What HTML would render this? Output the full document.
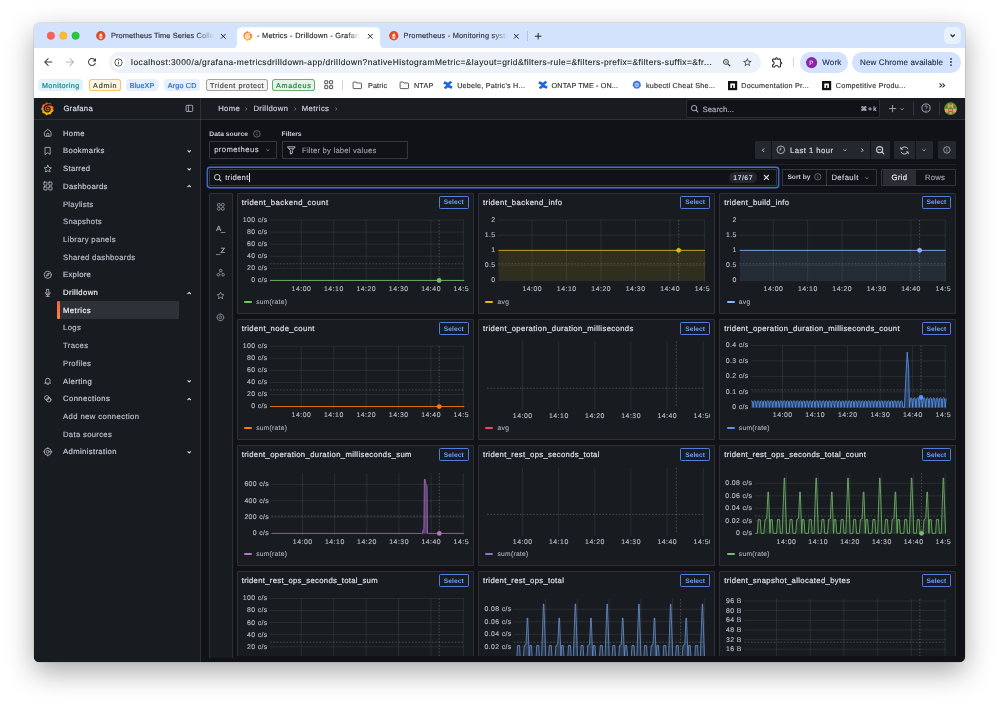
<!DOCTYPE html>
<html lang="en"><head><meta charset="utf-8"><title>- Metrics - Drilldown - Grafana</title>
<style>
html,body{margin:0;padding:0;background:#fff;}
body{width:999px;height:708px;overflow:hidden;position:relative;font-family:"Liberation Sans",sans-serif;}
#win{will-change:transform;position:absolute;left:34px;top:23px;width:931px;height:639px;border-radius:5.5px;overflow:hidden;background:linear-gradient(#d3e3fd 0,#d3e3fd 30px,#fff 30px,#fff 80px,#111217 80px);}
#shadow{position:absolute;left:34px;top:23px;width:931px;height:639px;border-radius:5.5px;
 box-shadow:0 0 0 0.5px rgba(0,0,0,.16),0 10px 28px rgba(0,0,0,.34);}
#win div,#win svg{position:absolute;box-sizing:border-box;}
#win svg{overflow:visible;}
.t{white-space:nowrap;line-height:12px;}
body{text-rendering:geometricPrecision;}
</style></head>
<body>
<div id="shadow"></div>
<div id="win">
<div style="left:0px;top:0px;width:931px;height:25px;background:#d3e3fd;"></div>
<div style="left:0px;top:25px;width:931px;height:49.7px;background:#fff;"></div>
<svg style="left:0px;top:0px;" width="60" height="25" viewBox="34 23 60 25"><circle cx="50.9" cy="35.700" r="3.750" fill="#fe5f57" stroke="#e2463f" stroke-width=".4"/><circle cx="63.3" cy="35.700" r="3.750" fill="#febc2e" stroke="#e0a028" stroke-width=".4"/><circle cx="75.6" cy="35.700" r="3.750" fill="#28c840" stroke="#1fa62f" stroke-width=".4"/></svg>
<svg style="left:0px;top:0px;" width="931" height="30" viewBox="34 23 931 30"><path d="M232 48.2 Q237 48.2 237 43.2 L237 32.2 Q237 27.2 242 27.2 L375 27.2 Q380 27.2 380 32.2 L380 43.2 Q380 48.2 385 48.2 Z" fill="#fff"/></svg>
<svg style="left:61.7px;top:7.9px;" width="9.6" height="9.6" viewBox="0 0 24 24"><circle cx="12" cy="12" r="11.700" fill="#e6481f"/><path d="M12.300 3.600C13 6.200 15.600 7.800 15.600 11V13.400H8.400V11C8.400 9 9.700 8.200 10 6.600C10.800 7.300 11.100 8.100 11.100 9C11.900 7.500 12.500 5.600 12.300 3.600Z" fill="#fff"/><rect x="6.900" y="14.300" width="10.200" height="1.800" fill="#fff"/><path d="M8.600 17H15.400C15.400 19 13.900 20.100 12 20.100C10.100 20.100 8.600 19 8.600 17Z" fill="#fff"/></svg>
<svg style="left:354.8px;top:7.9px;" width="9.6" height="9.6" viewBox="0 0 24 24"><circle cx="12" cy="12" r="11.700" fill="#e6481f"/><path d="M12.300 3.600C13 6.200 15.600 7.800 15.600 11V13.400H8.400V11C8.400 9 9.700 8.200 10 6.600C10.800 7.300 11.100 8.100 11.100 9C11.900 7.500 12.500 5.600 12.300 3.600Z" fill="#fff"/><rect x="6.900" y="14.300" width="10.200" height="1.800" fill="#fff"/><path d="M8.600 17H15.400C15.400 19 13.900 20.100 12 20.100C10.100 20.100 8.600 19 8.600 17Z" fill="#fff"/></svg>
<svg style="left:208.65px;top:7.75px;" width="9.7" height="9.7" viewBox="0 0 24 24"><defs><linearGradient id="gg1" x1="0" y1="0" x2="0" y2="1"><stop offset="0" stop-color="#f04e1c"/><stop offset=".5" stop-color="#f78b1f"/><stop offset="1" stop-color="#fbca0a"/></linearGradient></defs><path fill="url(#gg1)" stroke="url(#gg1)" stroke-width="1.2" stroke-linejoin="round" d="M7.66 4.04 L9.85 1.41 L14.18 3.25 L17.55 2.64 L19.68 6.84 L22.65 8.54 L21.59 13.12 L22.77 16.33 L19.01 19.16 L17.85 22.38 L13.15 22.13 L10.19 23.86 L6.75 20.64 L3.38 20.06 L2.81 15.39 L0.60 12.78 L3.17 8.83 L3.15 5.41Z"/><path d="M24.05 7.73 Q18.17 5.25 15.09 5.12 Q12.00 5.00 9.56 6.36 Q7.12 7.72 6.26 10.16 Q5.40 12.60 6.44 14.86 Q7.47 17.13 9.74 17.96 Q12.00 18.80 14.05 17.75 Q16.10 16.70 16.65 14.65 Q17.20 12.60 16.12 11.08 Q15.04 9.56 13.52 9.33 Q12.00 9.10 10.97 9.82 Q9.95 10.55 9.72 11.57 Q9.50 12.60 9.97 13.38 Q10.44 14.16 11.22 14.33 Q12.00 14.50 12.57 14.12 L13.13 13.73" fill="none" stroke="#fff" stroke-width="2.5" stroke-linecap="round"/></svg>
<div class="t" style="left:77px;top:7px;font-size:7.4px;color:#2f3134;-webkit-text-stroke:0.15px #2f3134;letter-spacing:0.11px;-webkit-mask-image:linear-gradient(90deg,#000 82%,transparent 100%);mask-image:linear-gradient(90deg,#000 82%,transparent 100%);">Prometheus Time Series Colle</div>
<div class="t" style="left:223px;top:7px;font-size:7.4px;color:#1f1f1f;-webkit-text-stroke:0.15px #1f1f1f;letter-spacing:0.27px;-webkit-mask-image:linear-gradient(90deg,#000 84%,transparent 96%);mask-image:linear-gradient(90deg,#000 84%,transparent 96%);">- Metrics - Drilldown - Grafana</div>
<div class="t" style="left:369.5px;top:7px;font-size:7.4px;color:#2f3134;-webkit-text-stroke:0.15px #2f3134;letter-spacing:0.21px;-webkit-mask-image:linear-gradient(90deg,#000 84%,transparent 97%);mask-image:linear-gradient(90deg,#000 84%,transparent 97%);">Prometheus - Monitoring syste</div>
<svg style="left:187.4px;top:10.5px;" width="4.6" height="4.6" viewBox="0 0 10 10"><path d="M0 0L10 10M10 0L0 10" stroke="#1f1f1f" stroke-width="2.07" fill="none"/></svg>
<svg style="left:333.7px;top:10.5px;" width="4.6" height="4.6" viewBox="0 0 10 10"><path d="M0 0L10 10M10 0L0 10" stroke="#1f1f1f" stroke-width="2.07" fill="none"/></svg>
<svg style="left:480.1px;top:10.5px;" width="4.6" height="4.6" viewBox="0 0 10 10"><path d="M0 0L10 10M10 0L0 10" stroke="#1f1f1f" stroke-width="2.07" fill="none"/></svg>
<div style="left:493.4px;top:8px;width:0.9px;height:9.6px;background:#a8c7fa;"></div>
<svg style="left:501.2px;top:9.6px;" width="6.4" height="6.4" viewBox="0 0 10 10"><path d="M5 0V10M0 5H10" stroke="#1f1f1f" stroke-width="1.500" fill="none"/></svg>
<div style="left:909.6px;top:4px;width:17.4px;height:17.4px;background:#e9f0fe;border-radius:5px;"></div>
<svg style="left:915.6px;top:11.4px;" width="5.4" height="3.2" viewBox="0 0 10 6"><path d="M1 1L5 5L9 1" stroke="#1f1f1f" stroke-width="2.200" fill="none"/></svg>
<svg style="left:7.9px;top:33.3px;" width="12.2" height="12.2" viewBox="0 0 24 24"><path fill="#3c4043" d="M20 11H7.830l5.590-5.590L12 4l-8 8 8 8 1.410-1.410L7.830 13H20v-2z"/></svg>
<svg style="left:29.8px;top:33.3px;" width="12.2" height="12.2" viewBox="0 0 24 24"><path fill="#b4b7bb" d="M4 11h12.170l-5.590-5.590L12 4l8 8-8 8-1.410-1.410L16.170 13H4v-2z"/></svg>
<svg style="left:52.2px;top:33.4px;" width="12" height="12" viewBox="0 0 24 24"><path fill="#3c4043" d="M17.650 6.350C16.200 4.900 14.210 4 12 4c-4.420 0-7.990 3.580-7.990 8s3.570 8 7.990 8c3.730 0 6.840-2.550 7.730-6h-2.080c-.82 2.330-3.040 4-5.650 4-3.310 0-6-2.690-6-6s2.690-6 6-6c1.660 0 3.140.69 4.220 1.780L13 11h7V4l-2.350 2.350z"/></svg>
<div style="left:74.6px;top:29px;width:652px;height:20.6px;background:#edf2fa;border-radius:10.3px;"></div>
<svg style="left:78px;top:32.8px;" width="13.2" height="13.2" viewBox="0 0 10 10"><circle cx="5" cy="5" r="5" fill="#fff"/></svg>
<svg style="left:80.1px;top:34.9px;" width="9" height="9" viewBox="0 0 24 24"><circle cx="12" cy="12" r="9.800" fill="none" stroke="#2b2d30" stroke-width="2.100"/><path d="M12 10.800v6.200" stroke="#2b2d30" stroke-width="2.300"/><circle cx="12" cy="7.400" r="1.400" fill="#2b2d30"/></svg>
<div class="t" style="left:97.1px;top:33px;font-size:8.4px;color:#1f1f1f;-webkit-text-stroke:0.12px #1f1f1f;letter-spacing:0.45px;">localhost:3000/a/grafana-metricsdrilldown-app/drilldown?nativeHistogramMetric=&amp;layout=grid&amp;filters-rule=&amp;filters-prefix=&amp;filters-suffix=&amp;fr...</div>
<svg style="left:687.7px;top:34.7px;" width="9.4" height="9.4" viewBox="0 0 24 24"><circle cx="10" cy="10" r="6.300" fill="none" stroke="#2a2c2f" stroke-width="2.300"/><path d="M14.800 14.800L21 21" stroke="#2a2c2f" stroke-width="2.800"/><path d="M7 10h6" stroke="#2a2c2f" stroke-width="1.900"/></svg>
<svg style="left:707.6px;top:33.9px;" width="10.6" height="10.6" viewBox="0 0 24 24"><path fill="#3c4043" d="M22 9.240l-7.190-.62L12 2 9.190 8.630 2 9.240l5.460 4.730L5.820 21 12 16.770 18.180 21l-1.630-7.030L22 9.240zM12 15.400l-3.760 2.270 1-4.280-3.320-2.880 4.380-.38L12 6.100l1.710 4.040 4.380.38-3.320 2.880 1 4.280L12 15.400z"/></svg>
<svg style="left:737.3px;top:33px;" width="12.6" height="12.6" viewBox="0 0 24 24"><path fill="#2f3134" d="M10.5 4.5c.28 0 .5.22.5.5v2h6v6h2c.28 0 .5.22.5.5s-.22.5-.5.5h-2v6h-2.120c-.68-1.750-2.390-3-4.380-3s-3.700 1.250-4.380 3H4v-2.120c1.750-.68 3-2.390 3-4.380 0-1.990-1.240-3.700-2.990-4.380L4 7h6V5c0-.28.22-.5.5-.5m0-2C9.120 2.5 8 3.620 8 5H4c-1.100 0-1.990.9-1.990 2v3.800h.29c1.490 0 2.700 1.210 2.700 2.700s-1.210 2.700-2.700 2.700H2V20c0 1.100.9 2 2 2h3.800v-.3c0-1.490 1.210-2.700 2.700-2.700s2.700 1.210 2.700 2.700v.3H17c1.100 0 2-.9 2-2v-4c1.380 0 2.500-1.120 2.500-2.500S20.380 11 19 11V7c0-1.100-.9-2-2-2h-4c0-1.380-1.120-2.500-2.500-2.500z"/></svg>
<div style="left:759.3px;top:34.4px;width:0.8px;height:10px;background:#c7d7f3;"></div>
<div style="left:766.1px;top:29px;width:48.3px;height:20.6px;background:#d3e3fd;border-radius:10.3px;"></div>
<svg style="left:771.8px;top:33.8px;" width="11.2" height="11.2" viewBox="0 0 10 10"><circle cx="5" cy="5" r="5" fill="#8e24aa"/></svg>
<div class="t" style="left:775.33px;top:35px;font-size:6.2px;color:#fff;">P</div>
<div class="t" style="left:788.3px;top:34px;font-size:8px;color:#1f2d4d;-webkit-text-stroke:0.15px #1f2d4d;letter-spacing:0.17px;">Work</div>
<div style="left:818px;top:29px;width:109px;height:20.6px;background:#d3e3fd;border-radius:10.3px;"></div>
<div class="t" style="left:826.1px;top:34px;font-size:8px;color:#1f2d4d;-webkit-text-stroke:0.15px #1f2d4d;letter-spacing:0.13px;">New Chrome available</div>
<svg style="left:915.2px;top:34.4px;" width="4" height="10" viewBox="0 0 4 10"><circle cx="2" cy="1.9" r=".9" fill="#1f2d4d"/><circle cx="2" cy="5" r=".9" fill="#1f2d4d"/><circle cx="2" cy="8.1" r=".9" fill="#1f2d4d"/></svg>
<div style="left:4px;top:55.7px;width:45.2px;height:12.8px;background:#dff3f8;border-radius:3.6px;"></div>
<div class="t" style="left:7.91px;top:57px;font-size:7.2px;color:#16808d;-webkit-text-stroke:0.17px #16808d;letter-spacing:0.42px;">Monitoring</div>
<div style="left:55px;top:55.7px;width:31.6px;height:12.8px;background:#fef6e0;border-radius:3.6px;box-shadow:inset 0 0 0 .8px #f6b73c;"></div>
<div class="t" style="left:59.08px;top:57px;font-size:7.2px;color:#3a3a3a;-webkit-text-stroke:0.17px #3a3a3a;letter-spacing:0.76px;">Admin</div>
<div style="left:92px;top:55.7px;width:32px;height:12.8px;background:#e6effd;border-radius:3.6px;"></div>
<div class="t" style="left:95.75px;top:57px;font-size:7.2px;color:#1a62d6;-webkit-text-stroke:0.17px #1a62d6;letter-spacing:0.1px;">BlueXP</div>
<div style="left:130px;top:55.7px;width:36.2px;height:12.8px;background:#e6effd;border-radius:3.6px;"></div>
<div class="t" style="left:133.79px;top:57px;font-size:7.2px;color:#1a62d6;-webkit-text-stroke:0.17px #1a62d6;letter-spacing:0.17px;">Argo CD</div>
<div style="left:172px;top:55.7px;width:61.7px;height:12.8px;background:#f3f3f3;border-radius:3.6px;box-shadow:inset 0 0 0 .8px #8c8c8c;"></div>
<div class="t" style="left:175.97px;top:57px;font-size:7.2px;color:#444;-webkit-text-stroke:0.17px #444;letter-spacing:0.54px;">Trident protect</div>
<div style="left:238px;top:55.7px;width:43px;height:12.8px;background:#e4f4e8;border-radius:3.6px;box-shadow:inset 0 0 0 .8px #3e9b4f;"></div>
<div class="t" style="left:242.07px;top:57px;font-size:7.2px;color:#1f7d36;-webkit-text-stroke:0.17px #1f7d36;letter-spacing:0.74px;">Amadeus</div>
<svg style="left:289.5px;top:57.4px;" width="9.4" height="9.4" viewBox="0 0 20 20"><rect x="1.6" y="1.6" width="6.400" height="6.400" rx=".5" fill="none" stroke="#2f3134" stroke-width="1.800"/><rect x="1.6" y="12" width="6.400" height="6.400" rx=".5" fill="none" stroke="#2f3134" stroke-width="1.800"/><rect x="12" y="1.6" width="6.400" height="6.400" rx=".5" fill="none" stroke="#2f3134" stroke-width="1.800"/><rect x="12" y="12" width="6.400" height="6.400" rx=".5" fill="none" stroke="#2f3134" stroke-width="1.800"/></svg>
<div style="left:308.1px;top:57.2px;width:0.8px;height:9.8px;background:#c7d7f3;"></div>
<svg style="left:318.2px;top:56.8px;" width="10.6" height="10.6" viewBox="0 0 24 24"><path d="M2.500 6a1.500 1.500 0 0 1 1.500-1.500h5l2 2.300h9a1.500 1.500 0 0 1 1.500 1.500V18a1.500 1.500 0 0 1-1.500 1.500H4A1.500 1.500 0 0 1 2.500 18z" fill="none" stroke="#3c4043" stroke-width="1.900"/></svg>
<div class="t" style="left:334px;top:57px;font-size:7.2px;color:#2c2e31;-webkit-text-stroke:0.14px #2c2e31;letter-spacing:0.13px;">Patric</div>
<svg style="left:364.7px;top:56.8px;" width="10.6" height="10.6" viewBox="0 0 24 24"><path d="M2.500 6a1.500 1.500 0 0 1 1.500-1.500h5l2 2.300h9a1.500 1.500 0 0 1 1.500 1.500V18a1.500 1.500 0 0 1-1.500 1.500H4A1.500 1.500 0 0 1 2.500 18z" fill="none" stroke="#3c4043" stroke-width="1.900"/></svg>
<div class="t" style="left:380px;top:57px;font-size:7.2px;color:#2c2e31;-webkit-text-stroke:0.14px #2c2e31;letter-spacing:0.18px;">NTAP</div>
<svg style="left:409px;top:57.1px;" width="10" height="10" viewBox="0 0 24 24"><path fill="#1868db" d="M2.200 17.300c-.3.500-.6 1-.8 1.400-.2.400-.1.900.3 1.100l4.500 2.800c.4.200.9.100 1.100-.3.200-.4.500-.900.800-1.400 2.100-3.400 4.200-3 8-1.200l4.500 2.100c.4.200.9 0 1.100-.400l2.100-4.800c.200-.4 0-.9-.400-1.100-1-.5-2.900-1.400-4.500-2.200-6.100-2.900-11.300-2.700-15.100 3.500z" transform="scale(.92) translate(1,1)"/><path fill="#1868db" d="M21.800 6.700c.3-.5.600-1 .8-1.400.2-.4.100-.9-.3-1.100l-4.500-2.800c-.4-.2-.9-.1-1.100.3-.2.400-.5.900-.8 1.400-2.100 3.400-4.200 3-8 1.200L3.400 2.200c-.4-.2-.9 0-1.100.400L.200 7.400c-.2.400 0 .9.400 1.100 1 .5 2.900 1.400 4.500 2.200 6.100 2.900 11.300 2.700 15.100-3.500z" transform="scale(.92) translate(1,1)"/></svg>
<div class="t" style="left:423.2px;top:57px;font-size:7.2px;color:#2c2e31;-webkit-text-stroke:0.14px #2c2e31;letter-spacing:0.22px;">Uebele, Patric&#x27;s H...</div>
<svg style="left:503.8px;top:57.1px;" width="10" height="10" viewBox="0 0 24 24"><path fill="#1868db" d="M2.200 17.300c-.3.500-.6 1-.8 1.400-.2.400-.1.900.3 1.100l4.500 2.800c.4.200.9.100 1.100-.3.200-.4.500-.900.800-1.400 2.100-3.400 4.200-3 8-1.200l4.500 2.100c.4.200.9 0 1.100-.400l2.100-4.800c.200-.4 0-.9-.400-1.100-1-.5-2.900-1.400-4.500-2.200-6.100-2.900-11.300-2.700-15.100 3.500z" transform="scale(.92) translate(1,1)"/><path fill="#1868db" d="M21.800 6.700c.3-.5.600-1 .8-1.400.2-.4.100-.9-.3-1.100l-4.500-2.800c-.4-.2-.9-.1-1.100.3-.2.400-.5.900-.8 1.400-2.100 3.400-4.200 3-8 1.200L3.400 2.200c-.4-.2-.9 0-1.100.400L.200 7.400c-.2.400 0 .9.400 1.100 1 .5 2.900 1.400 4.500 2.200 6.100 2.900 11.300 2.700 15.100-3.500z" transform="scale(.92) translate(1,1)"/></svg>
<div class="t" style="left:517.6px;top:57px;font-size:7.2px;color:#2c2e31;-webkit-text-stroke:0.14px #2c2e31;letter-spacing:0.13px;">ONTAP TME - ON...</div>
<svg style="left:598.3px;top:57.3px;" width="9.6" height="9.6" viewBox="0 0 24 24"><path fill="#326ce5" d="M12 1.300l8.300 4 2.100 9-5.800 7.200H7.400l-5.800-7.200 2.100-9z"/><circle cx="12" cy="12.300" r="4.600" fill="none" stroke="#fff" stroke-width="1.300"/><path d="M12 5.500v13.600M6.100 8.900l11.800 6.800M17.900 8.900L6.100 15.700" stroke="#fff" stroke-width="1.100"/><circle cx="12" cy="12.300" r="1.500" fill="#326ce5"/></svg>
<div class="t" style="left:612px;top:57px;font-size:7.2px;color:#2c2e31;-webkit-text-stroke:0.14px #2c2e31;letter-spacing:0.23px;">kubectl Cheat She...</div>
<svg style="left:693.6px;top:57.5px;" width="9.2" height="9.2" viewBox="0 0 24 24"><rect x="0" y="0" width="24" height="24" fill="#111"/><path fill="#fff" d="M6 6.500h12V18h-4.300v-7.200h-3.400V18H6z"/></svg>
<div class="t" style="left:707.2px;top:57px;font-size:7.2px;color:#2c2e31;-webkit-text-stroke:0.14px #2c2e31;letter-spacing:0.25px;">Documentation Pr...</div>
<svg style="left:788.2px;top:57.5px;" width="9.2" height="9.2" viewBox="0 0 24 24"><rect x="0" y="0" width="24" height="24" fill="#111"/><path fill="#fff" d="M6 6.500h12V18h-4.300v-7.200h-3.400V18H6z"/></svg>
<div class="t" style="left:801.7px;top:57px;font-size:7.2px;color:#2c2e31;-webkit-text-stroke:0.14px #2c2e31;letter-spacing:0.25px;">Competitive Produ...</div>
<svg style="left:905px;top:59.7px;" width="6.4" height="4.8" viewBox="0 0 12 9"><path d="M1 .8L5 4.500L1 8.200M6.500 .8L10.500 4.500L6.500 8.200" fill="none" stroke="#2f3134" stroke-width="2"/></svg>
<div style="left:0px;top:74.7px;width:931px;height:564.3px;background:#111217;"></div>
<div style="left:0px;top:74.7px;width:931px;height:22.3px;background:#181b1f;border-bottom:.6px solid rgba(204,204,220,0.12);"></div>
<div style="left:0px;top:74.7px;width:166.6px;height:564.3px;background:#181b1f;border-right:.6px solid rgba(204,204,220,0.12);"></div>
<div style="left:0px;top:96.4px;width:166.6px;height:0.6px;background:rgba(204,204,220,0.12);"></div>
<svg style="left:6.9px;top:79.2px;" width="13" height="13" viewBox="0 0 24 24"><defs><linearGradient id="gg2" x1="0" y1="0" x2="0" y2="1"><stop offset="0" stop-color="#f04e1c"/><stop offset=".5" stop-color="#f78b1f"/><stop offset="1" stop-color="#fbca0a"/></linearGradient></defs><path fill="url(#gg2)" stroke="url(#gg2)" stroke-width="1.2" stroke-linejoin="round" d="M7.66 4.04 L9.85 1.41 L14.18 3.25 L17.55 2.64 L19.68 6.84 L22.65 8.54 L21.59 13.12 L22.77 16.33 L19.01 19.16 L17.85 22.38 L13.15 22.13 L10.19 23.86 L6.75 20.64 L3.38 20.06 L2.81 15.39 L0.60 12.78 L3.17 8.83 L3.15 5.41Z"/><path d="M24.05 7.73 Q18.17 5.25 15.09 5.12 Q12.00 5.00 9.56 6.36 Q7.12 7.72 6.26 10.16 Q5.40 12.60 6.44 14.86 Q7.47 17.13 9.74 17.96 Q12.00 18.80 14.05 17.75 Q16.10 16.70 16.65 14.65 Q17.20 12.60 16.12 11.08 Q15.04 9.56 13.52 9.33 Q12.00 9.10 10.97 9.82 Q9.95 10.55 9.72 11.57 Q9.50 12.60 9.97 13.38 Q10.44 14.16 11.22 14.33 Q12.00 14.50 12.57 14.12 L13.13 13.73" fill="none" stroke="#181b1f" stroke-width="2.5" stroke-linecap="round"/></svg>
<div class="t" style="left:29.4px;top:80px;font-size:7.7px;color:#dadae6;-webkit-text-stroke:0.2px #dadae6;letter-spacing:0.25px;">Grafana</div>
<svg style="left:150.6px;top:81.2px;" width="8.8" height="8.8" viewBox="0 0 24 24"><rect x="3" y="3.500" width="18" height="17" rx="2.500" fill="none" stroke="#ccccdc" stroke-width="2"/><path d="M9.300 3.500v17" stroke="#ccccdc" stroke-width="2"/></svg>
<div class="t" style="left:184.2px;top:80px;font-size:7.7px;color:#ccccdc;-webkit-text-stroke:0.18px #ccccdc;letter-spacing:0.36px;">Home</div>
<svg style="left:211.26px;top:84px;" width="2.28" height="3.8" viewBox="0 0 6 10"><path d="M1 1L5 5L1 9" fill="none" stroke="#a0a1ae" stroke-width="1.700"/></svg>
<div class="t" style="left:219.4px;top:80px;font-size:7.7px;color:#ccccdc;-webkit-text-stroke:0.18px #ccccdc;letter-spacing:0.37px;">Drilldown</div>
<svg style="left:259.86px;top:84px;" width="2.28" height="3.8" viewBox="0 0 6 10"><path d="M1 1L5 5L1 9" fill="none" stroke="#a0a1ae" stroke-width="1.700"/></svg>
<div class="t" style="left:267.8px;top:80px;font-size:7.7px;color:#ccccdc;-webkit-text-stroke:0.18px #ccccdc;letter-spacing:0.4px;">Metrics</div>
<svg style="left:301.06px;top:84px;" width="2.28" height="3.8" viewBox="0 0 6 10"><path d="M1 1L5 5L1 9" fill="none" stroke="#a0a1ae" stroke-width="1.700"/></svg>
<div style="left:652.4px;top:76.4px;width:193.9px;height:18.5px;background:#111217;border:.6px solid rgba(204,204,220,0.15);border-radius:2px;"></div>
<svg style="left:656.3px;top:81.1px;" width="9.4" height="9.4" viewBox="0 0 24 24"><circle cx="10.500" cy="10.500" r="6.900" fill="none" stroke="#a9aab8" stroke-width="2.500"/><path d="M15.600 15.600L20 20" stroke="#a9aab8" stroke-width="2.700" stroke-linecap="round"/></svg>
<div class="t" style="left:668.6px;top:81px;font-size:7.7px;color:#a9aab8;-webkit-text-stroke:0.2px #a9aab8;letter-spacing:0.06px;">Search...</div>
<div class="t" style="left:826.8px;top:81px;font-size:6.3px;color:#c4c5d2;-webkit-text-stroke:0.2px #c4c5d2;letter-spacing:1.28px;">⌘+k</div>
<svg style="left:855px;top:82px;" width="7.2" height="7.2" viewBox="0 0 10 10"><path d="M5 0V10M0 5H10" stroke="#a6a7b4" stroke-width="1.300" fill="none"/></svg>
<svg style="left:865.9px;top:84.75px;" width="4.2" height="2.31" viewBox="0 0 10 6"><path d="M1 1L5 5L9 1" fill="none" stroke="#b4b5c3" stroke-width="2.2"/></svg>
<div style="left:879.3px;top:79.4px;width:1.1px;height:12.4px;background:#34363d;"></div>
<svg style="left:887.4px;top:80.4px;" width="10" height="10" viewBox="0 0 24 24"><circle cx="12" cy="12" r="9.800" fill="none" stroke="#a9aab8" stroke-width="2.300"/><path d="M9.300 9.400a2.800 2.800 0 1 1 4 2.600c-.9.500-1.300 1-1.300 2" fill="none" stroke="#a9aab8" stroke-width="2.200"/><circle cx="12" cy="17.200" r="1.300" fill="#a9aab8"/></svg>
<div style="left:904.5px;top:79.4px;width:1.1px;height:12.4px;background:#34363d;"></div>
<svg style="left:910px;top:78.8px;" width="13.2" height="13.2" viewBox="0 0 24 24"><clipPath id="avc"><circle cx="12" cy="12" r="12"/></clipPath><g clip-path="url(#avc)"><circle cx="12" cy="12" r="12" fill="#5a8f1e"/><path d="M7.300 3h2.700v3h4V3h2.700v8.500H14V8.200h-4v3.300H7.300z" fill="#ff8f82"/><path d="M1.500 12.500h6.300v6.800H1.500zM16.200 12.500h6.300v6.800h-6.300zM9.300 12.800h5.400v3.400H9.300zM9.800 18.200h4.400v3.200H9.800z" fill="#ff8f82"/><path d="M10.800 13.600h2.400v1.500h-2.400z" fill="#5a8f1e"/></g></svg>
<div class="t" style="left:29px;top:105px;font-size:7.7px;color:#c6c6d5;-webkit-text-stroke:0.18px #c6c6d5;letter-spacing:0.31px;">Home</div>
<svg style="left:9.1px;top:105.2px;" width="9.6" height="9.6" viewBox="0 0 24 24"><path fill="none" stroke="rgba(204,204,220,0.82)" stroke-width="2.200" stroke-linejoin="round" stroke-linecap="round" d="M3.800 10.200L12 3.200l8.200 7v8.800a1.800 1.800 0 0 1-1.800 1.800H5.600a1.800 1.800 0 0 1-1.800-1.800z"/><path fill="none" stroke="rgba(204,204,220,0.82)" stroke-width="2.200" stroke-linejoin="round" stroke-linecap="round" d="M9.200 20.500v-4.700a2.800 2.800 0 0 1 5.600 0v4.700"/></svg>
<div class="t" style="left:29px;top:122px;font-size:7.7px;color:#c6c6d5;-webkit-text-stroke:0.18px #c6c6d5;letter-spacing:0.37px;">Bookmarks</div>
<svg style="left:9.1px;top:122.9px;" width="9.6" height="9.6" viewBox="0 0 24 24"><path fill="none" stroke="rgba(204,204,220,0.82)" stroke-width="2.200" stroke-linejoin="round" stroke-linecap="round" d="M6 3.500h12v17.500l-6-4-6 4z"/></svg>
<svg style="left:153px;top:126.99px;" width="4.4" height="2.42" viewBox="0 0 10 6"><path d="M1 1L5 5L9 1" fill="none" stroke="#d6d6e3" stroke-width="2.7"/></svg>
<div class="t" style="left:29px;top:140px;font-size:7.7px;color:#c6c6d5;-webkit-text-stroke:0.18px #c6c6d5;letter-spacing:0.31px;">Starred</div>
<svg style="left:9.1px;top:140.6px;" width="9.6" height="9.6" viewBox="0 0 24 24"><path fill="none" stroke="rgba(204,204,220,0.82)" stroke-width="2.200" stroke-linejoin="round" stroke-linecap="round" d="M12 3l2.700 5.700 6.300.8-4.600 4.300 1.200 6.200-5.600-3.100L6.400 20l1.200-6.200L3 9.500l6.300-.8z"/></svg>
<svg style="left:153px;top:144.69px;" width="4.4" height="2.42" viewBox="0 0 10 6"><path d="M1 1L5 5L9 1" fill="none" stroke="#d6d6e3" stroke-width="2.7"/></svg>
<div class="t" style="left:29px;top:158px;font-size:7.7px;color:#c6c6d5;-webkit-text-stroke:0.18px #c6c6d5;letter-spacing:0.33px;">Dashboards</div>
<svg style="left:8.95px;top:158.15px;" width="9.9" height="9.9" viewBox="0 0 24 24"><rect fill="none" stroke="rgba(204,204,220,0.82)" stroke-width="2.200" stroke-linejoin="round" stroke-linecap="round" x="2.2" y="2.6" width="7.600" height="7.600" rx=".8"/><rect fill="none" stroke="rgba(204,204,220,0.82)" stroke-width="2.200" stroke-linejoin="round" stroke-linecap="round" x="2.2" y="14.2" width="7.600" height="7.600" rx=".8"/><rect fill="none" stroke="rgba(204,204,220,0.82)" stroke-width="2.200" stroke-linejoin="round" stroke-linecap="round" x="14.2" y="2.6" width="7.600" height="7.600" rx=".8"/><rect fill="none" stroke="rgba(204,204,220,0.82)" stroke-width="2.200" stroke-linejoin="round" stroke-linecap="round" x="14.2" y="14.2" width="7.600" height="7.600" rx=".8"/></svg>
<svg style="left:153px;top:162.49px;" width="4.4" height="2.42" viewBox="0 0 10 6"><path d="M1 5L5 1L9 5" fill="none" stroke="#d6d6e3" stroke-width="2.7"/></svg>
<div class="t" style="left:29px;top:176px;font-size:7.7px;color:#bcbccb;-webkit-text-stroke:0.18px #bcbccb;letter-spacing:0.24px;">Playlists</div>
<div class="t" style="left:29px;top:193px;font-size:7.7px;color:#bcbccb;-webkit-text-stroke:0.18px #bcbccb;letter-spacing:0.29px;">Snapshots</div>
<div class="t" style="left:29px;top:211px;font-size:7.7px;color:#bcbccb;-webkit-text-stroke:0.18px #bcbccb;letter-spacing:0.33px;">Library panels</div>
<div class="t" style="left:29px;top:229px;font-size:7.7px;color:#bcbccb;-webkit-text-stroke:0.18px #bcbccb;letter-spacing:0.31px;">Shared dashboards</div>
<div class="t" style="left:29px;top:246px;font-size:7.7px;color:#c6c6d5;-webkit-text-stroke:0.18px #c6c6d5;letter-spacing:0.3px;">Explore</div>
<svg style="left:9.1px;top:246.8px;" width="9.6" height="9.6" viewBox="0 0 24 24"><circle fill="none" stroke="rgba(204,204,220,0.82)" stroke-width="2.200" stroke-linejoin="round" stroke-linecap="round" cx="12" cy="12" r="9"/><path fill="none" stroke="rgba(204,204,220,0.82)" stroke-width="2.200" stroke-linejoin="round" stroke-linecap="round" d="M15.500 8.500l-2 5-5 2 2-5z"/></svg>
<div class="t" style="left:29px;top:264px;font-size:7.7px;color:#ececf4;-webkit-text-stroke:0.18px #ececf4;letter-spacing:0.41px;">Drilldown</div>
<svg style="left:9.1px;top:264.5px;" width="9.6" height="9.6" viewBox="0 0 24 24"><path fill="none" stroke="rgba(204,204,220,0.82)" stroke-width="2.200" stroke-linejoin="round" stroke-linecap="round" d="M9.500 3.500h5v9a2.500 2.500 0 0 1-5 0z"/><path fill="none" stroke="rgba(204,204,220,0.82)" stroke-width="2.200" stroke-linejoin="round" stroke-linecap="round" d="M6 11.500a6 6 0 0 0 12 0M12 17.500v3M8 20.800h8"/></svg>
<svg style="left:153px;top:268.69px;" width="4.4" height="2.42" viewBox="0 0 10 6"><path d="M1 5L5 1L9 5" fill="none" stroke="#d6d6e3" stroke-width="2.7"/></svg>
<div style="left:23.5px;top:278.2px;width:121.2px;height:17.6px;background:rgba(204,204,220,0.13);border-radius:1.100px;"></div>
<div style="left:23.4px;top:278.2px;width:2.5px;height:17.6px;background:linear-gradient(#f55f3e,#ff8833);border-radius:1.100px;"></div>
<div class="t" style="left:29px;top:282px;font-size:7.7px;color:#f0f0f6;-webkit-text-stroke:0.18px #f0f0f6;letter-spacing:0.46px;">Metrics</div>
<div class="t" style="left:29px;top:299px;font-size:7.7px;color:#bcbccb;-webkit-text-stroke:0.18px #bcbccb;letter-spacing:0.38px;">Logs</div>
<div class="t" style="left:29px;top:317px;font-size:7.7px;color:#bcbccb;-webkit-text-stroke:0.18px #bcbccb;letter-spacing:0.36px;">Traces</div>
<div class="t" style="left:29px;top:335px;font-size:7.7px;color:#bcbccb;-webkit-text-stroke:0.18px #bcbccb;letter-spacing:0.32px;">Profiles</div>
<div class="t" style="left:29px;top:353px;font-size:7.7px;color:#c6c6d5;-webkit-text-stroke:0.18px #c6c6d5;letter-spacing:0.39px;">Alerting</div>
<svg style="left:9.1px;top:353px;" width="9.6" height="9.6" viewBox="0 0 24 24"><path fill="none" stroke="rgba(204,204,220,0.82)" stroke-width="2.200" stroke-linejoin="round" stroke-linecap="round" d="M6.500 16.500v-5.500a5.500 5.500 0 0 1 11 0v5.500l1.500 1.500h-14zM10 20.500h4"/></svg>
<svg style="left:153px;top:357.09px;" width="4.4" height="2.42" viewBox="0 0 10 6"><path d="M1 1L5 5L9 1" fill="none" stroke="#d6d6e3" stroke-width="2.7"/></svg>
<div class="t" style="left:29px;top:370px;font-size:7.7px;color:#c6c6d5;-webkit-text-stroke:0.18px #c6c6d5;letter-spacing:0.4px;">Connections</div>
<svg style="left:9.1px;top:370.7px;" width="9.6" height="9.6" viewBox="0 0 24 24"><circle fill="none" stroke="rgba(204,204,220,0.82)" stroke-width="2.200" stroke-linejoin="round" stroke-linecap="round" cx="9.500" cy="9.500" r="5.500"/><circle fill="none" stroke="rgba(204,204,220,0.82)" stroke-width="2.200" stroke-linejoin="round" stroke-linecap="round" cx="14.500" cy="14.500" r="5.500"/></svg>
<svg style="left:153px;top:374.89px;" width="4.4" height="2.42" viewBox="0 0 10 6"><path d="M1 5L5 1L9 5" fill="none" stroke="#d6d6e3" stroke-width="2.7"/></svg>
<div class="t" style="left:29px;top:388px;font-size:7.7px;color:#bcbccb;-webkit-text-stroke:0.18px #bcbccb;letter-spacing:0.4px;">Add new connection</div>
<div class="t" style="left:29px;top:406px;font-size:7.7px;color:#bcbccb;-webkit-text-stroke:0.18px #bcbccb;letter-spacing:0.32px;">Data sources</div>
<div class="t" style="left:29px;top:423px;font-size:7.7px;color:#c6c6d5;-webkit-text-stroke:0.18px #c6c6d5;letter-spacing:0.37px;">Administration</div>
<svg style="left:9.1px;top:423.8px;" width="9.6" height="9.6" viewBox="0 0 24 24"><circle fill="none" stroke="rgba(204,204,220,0.82)" stroke-width="2.200" stroke-linejoin="round" stroke-linecap="round" cx="12" cy="12" r="8.800"/><circle fill="none" stroke="rgba(204,204,220,0.82)" stroke-width="2.200" stroke-linejoin="round" stroke-linecap="round" cx="12" cy="12" r="3.600"/><path fill="none" stroke="rgba(204,204,220,0.82)" stroke-width="2.200" stroke-linejoin="round" stroke-linecap="round" d="M12 1.800v2.200M12 20v2.200M1.800 12H4M20 12h2.200"/></svg>
<svg style="left:153px;top:427.89px;" width="4.4" height="2.42" viewBox="0 0 10 6"><path d="M1 1L5 5L9 1" fill="none" stroke="#d6d6e3" stroke-width="2.7"/></svg>
<div class="t" style="left:175.3px;top:106px;font-size:6.7px;color:#d0d0de;font-weight:700;letter-spacing:0.04px;">Data source</div>
<svg style="left:219.4px;top:106.8px;" width="7.8" height="7.8" viewBox="0 0 24 24"><circle cx="12" cy="12" r="10" fill="none" stroke="rgba(204,204,220,0.65)" stroke-width="2"/><path d="M12 11v6" stroke="rgba(204,204,220,0.65)" stroke-width="2.200"/><circle cx="12" cy="7.500" r="1.300" fill="rgba(204,204,220,0.65)"/></svg>
<div class="t" style="left:247.6px;top:106px;font-size:6.7px;color:#d0d0de;font-weight:700;letter-spacing:-0.02px;">Filters</div>
<div style="left:175.3px;top:118px;width:67.8px;height:18px;background:#111217;border:.6px solid rgba(204,204,220,0.20);border-radius:1.100px;"></div>
<div class="t" style="left:180.2px;top:121px;font-size:7.7px;color:#d2d2df;-webkit-text-stroke:0.12px #d2d2df;letter-spacing:0.41px;">prometheus</div>
<svg style="left:231.5px;top:126.16px;" width="3.8" height="2.09" viewBox="0 0 10 6"><path d="M1 1L5 5L9 1" fill="none" stroke="#a9aab8" stroke-width="2"/></svg>
<div style="left:247.6px;top:118px;width:126px;height:18px;background:#111217;border:.6px solid rgba(204,204,220,0.20);border-radius:1.100px;"></div>
<svg style="left:252.3px;top:121.9px;" width="10.6" height="10.6" viewBox="0 0 24 24"><path d="M3.200 4.200h17.600l-6.600 8.200v6.400l-4.400 1.600v-8z" fill="none" stroke="#c2c3d0" stroke-width="2.100" stroke-linejoin="round"/><path d="M6.800 8.400h10.400" stroke="#c2c3d0" stroke-width="1.700"/></svg>
<div class="t" style="left:268px;top:122px;font-size:7.7px;color:#9fa0ae;-webkit-text-stroke:0.1px #9fa0ae;letter-spacing:0.2px;">Filter by label values</div>
<div style="left:720.8px;top:118.1px;width:16.2px;height:17.8px;background:#24272d;border-radius:1.100px 0 0 1.100px;"></div>
<div style="left:737.6px;top:118.1px;width:82.2px;height:17.8px;background:#24272d;border-radius:0;"></div>
<div style="left:820.4px;top:118.1px;width:16px;height:17.8px;background:#24272d;border-radius:0;"></div>
<div style="left:837px;top:118.1px;width:19.3px;height:17.8px;background:#24272d;border-radius:0 1.100px 1.100px 0;"></div>
<div style="left:860.3px;top:118.1px;width:20.6px;height:17.8px;background:#24272d;border-radius:1.100px 0 0 1.100px;"></div>
<div style="left:881.5px;top:118.1px;width:17.8px;height:17.8px;background:#24272d;border-radius:0 1.100px 1.100px 0;"></div>
<div style="left:904.3px;top:118.1px;width:17.7px;height:17.8px;background:#24272d;border-radius:1.100px;"></div>
<svg style="left:727.7px;top:124.8px;" width="2.6" height="4.4" viewBox="0 0 6 10"><path d="M5 1L1 5L5 9" fill="none" stroke="#d6d6e2" stroke-width="2.200"/></svg>
<svg style="left:741.8px;top:122.2px;" width="9.6" height="9.6" viewBox="0 0 24 24"><circle cx="12" cy="12" r="9.500" fill="none" stroke="#ccccdc" stroke-width="2"/><path d="M12 6.500v6h-4" fill="none" stroke="#ccccdc" stroke-width="2"/></svg>
<div class="t" style="left:756px;top:122px;font-size:7.7px;color:#d6d6e2;-webkit-text-stroke:0.2px #d6d6e2;letter-spacing:0.46px;">Last 1 hour</div>
<svg style="left:808.6px;top:126.2px;" width="4" height="2.2" viewBox="0 0 10 6"><path d="M1 1L5 5L9 1" fill="none" stroke="#d6d6e2" stroke-width="2.2"/></svg>
<svg style="left:827.1px;top:124.8px;" width="2.6" height="4.4" viewBox="0 0 6 10"><path d="M1 1L5 5L1 9" fill="none" stroke="#d6d6e2" stroke-width="2.200"/></svg>
<svg style="left:841.3px;top:121.9px;" width="10.6" height="10.6" viewBox="0 0 24 24"><circle cx="10.500" cy="10.500" r="6.900" fill="none" stroke="#ccccdc" stroke-width="2.500"/><path d="M15.600 15.600L20 20" stroke="#ccccdc" stroke-width="2.700" stroke-linecap="round"/><path d="M7.300 10.500h6.400" stroke="#ccccdc" stroke-width="1.900"/></svg>
<svg style="left:864.9px;top:121.5px;" width="11" height="11" viewBox="0 0 24 24"><path d="M19.500 9A8 8 0 0 0 5 8.500M4.500 15A8 8 0 0 0 19 15.500" fill="none" stroke="#ccccdc" stroke-width="2.100"/><path d="M4 4.500v4.500h4.500M20 19.500V15h-4.500" fill="none" stroke="#ccccdc" stroke-width="2.100"/></svg>
<svg style="left:888.4px;top:126.2px;" width="4" height="2.2" viewBox="0 0 10 6"><path d="M1 1L5 5L9 1" fill="none" stroke="#d6d6e2" stroke-width="2.2"/></svg>
<svg style="left:909.2px;top:123.1px;" width="7.8" height="7.8" viewBox="0 0 24 24"><circle cx="12" cy="12" r="10" fill="none" stroke="#ccccdc" stroke-width="2.100"/><path d="M12 11v6" stroke="#ccccdc" stroke-width="2.300"/><circle cx="12" cy="7.400" r="1.400" fill="#ccccdc"/></svg>
<div style="left:175.3px;top:140.6px;width:746.7px;height:0.6px;background:rgba(204,204,220,0.09);"></div>
<div style="left:174.9px;top:145.5px;width:568.2px;height:17.4px;background:#111217;border:.6px solid rgba(204,204,220,0.20);border-radius:1.300px;box-shadow:0 0 0 1.100px #111217,0 0 0 2.400px #3d71d9;"></div>
<svg style="left:178.8px;top:149.5px;" width="9.6" height="9.6" viewBox="0 0 24 24"><circle cx="10.500" cy="10.500" r="6.900" fill="none" stroke="#c8c9d6" stroke-width="2.500"/><path d="M15.600 15.600L20 20" stroke="#c8c9d6" stroke-width="2.700" stroke-linecap="round"/></svg>
<div class="t" style="left:191.2px;top:149px;font-size:7.7px;color:#d6d6e2;-webkit-text-stroke:0.12px #d6d6e2;letter-spacing:0.29px;">trident</div>
<div style="left:215px;top:149.8px;width:0.7px;height:8.8px;background:#e8e8f0;"></div>
<div style="left:694.5px;top:148.5px;width:28.7px;height:11.6px;background:#23262c;border-radius:5.800px;"></div>
<div class="t" style="left:699.36px;top:150px;font-size:6.8px;color:#d4d4e0;font-weight:700;letter-spacing:0.52px;">17/67</div>
<svg style="left:729.7px;top:152px;" width="4.8" height="4.8" viewBox="0 0 10 10"><path d="M0 0L10 10M10 0L0 10" stroke="#d6d6e2" stroke-width="2.4" fill="none"/></svg>
<div style="left:748.2px;top:145.5px;width:94.5px;height:17.4px;background:#111217;border:.6px solid rgba(204,204,220,0.20);border-radius:1.100px;"></div>
<div style="left:792.2px;top:145.5px;width:0.6px;height:17.4px;background:rgba(204,204,220,0.20);"></div>
<div class="t" style="left:753.4px;top:149px;font-size:6.6px;color:#ccccdc;font-weight:700;letter-spacing:0.07px;">Sort by</div>
<svg style="left:779.8px;top:150.4px;" width="7.6" height="7.6" viewBox="0 0 24 24"><circle cx="12" cy="12" r="10" fill="none" stroke="rgba(204,204,220,0.65)" stroke-width="2"/><path d="M12 11v6" stroke="rgba(204,204,220,0.65)" stroke-width="2.200"/><circle cx="12" cy="7.500" r="1.300" fill="rgba(204,204,220,0.65)"/></svg>
<div class="t" style="left:797.4px;top:149px;font-size:7.7px;color:#d2d2df;-webkit-text-stroke:0.12px #d2d2df;letter-spacing:0.43px;">Default</div>
<svg style="left:831.3px;top:153.56px;" width="3.8" height="2.09" viewBox="0 0 10 6"><path d="M1 1L5 5L9 1" fill="none" stroke="#a9aab8" stroke-width="2"/></svg>
<div style="left:847.3px;top:145.5px;width:74.7px;height:17.4px;background:#111217;border:.6px solid rgba(204,204,220,0.20);border-radius:1.100px;"></div>
<div style="left:848.8px;top:146.7px;width:32.8px;height:15px;background:#2a2d34;border-radius:1.100px;"></div>
<div class="t" style="left:857.46px;top:149px;font-size:7.7px;color:#e9e9f1;-webkit-text-stroke:0.2px #e9e9f1;letter-spacing:0.31px;">Grid</div>
<div class="t" style="left:891.09px;top:149px;font-size:7.7px;color:#a3a4b2;-webkit-text-stroke:0.15px #a3a4b2;letter-spacing:0.19px;">Rows</div>
<div style="left:174.6px;top:169.7px;width:24px;height:465.3px;background:#181b1f;border:.6px solid rgba(204,204,220,0.12);border-bottom:none;border-radius:1.100px 1.100px 0 0;"></div>
<svg style="left:181.9px;top:179.1px;" width="9.6" height="9.6" viewBox="0 0 24 24"><circle fill="none" stroke="#a9aab8" stroke-width="1.800" cx="7" cy="7" r="3.700"/><circle fill="none" stroke="#a9aab8" stroke-width="1.800" cx="7" cy="17" r="3.700"/><circle fill="none" stroke="#a9aab8" stroke-width="1.800" cx="17" cy="7" r="3.700"/><circle fill="none" stroke="#a9aab8" stroke-width="1.800" cx="17" cy="17" r="3.700"/></svg>
<div class="t" style="left:182.19px;top:200px;font-size:7.4px;color:#b4b5c3;-webkit-text-stroke:0.2px #b4b5c3;letter-spacing:-0.03px;">A_</div>
<div class="t" style="left:182.29px;top:222px;font-size:7.4px;color:#b4b5c3;-webkit-text-stroke:0.2px #b4b5c3;letter-spacing:0.18px;">_Z</div>
<svg style="left:182px;top:244.8px;" width="9.4" height="9.4" viewBox="0 0 24 24"><circle fill="none" stroke="#a9aab8" stroke-width="1.800" cx="12" cy="6.200" r="3.300"/><circle fill="none" stroke="#a9aab8" stroke-width="1.800" cx="5.800" cy="17.300" r="3.300"/><circle fill="none" stroke="#a9aab8" stroke-width="1.800" cx="18.200" cy="17.300" r="3.300"/><path fill="none" stroke="#a9aab8" stroke-width="1.800" stroke-opacity=".55" d="M10 9.200L7.600 14.200M14 9.200l2.400 5M9.500 17.300h5"/></svg>
<svg style="left:182.1px;top:267.6px;" width="9.2" height="9.2" viewBox="0 0 24 24"><path fill="none" stroke="#a9aab8" stroke-width="1.800" stroke-linejoin="round" d="M12 3l2.700 5.700 6.300.8-4.600 4.300 1.200 6.200-5.600-3.100L6.400 20l1.200-6.200L3 9.500l6.300-.8z"/></svg>
<svg style="left:182.3px;top:290.2px;" width="8.8" height="8.8" viewBox="0 0 24 24"><circle fill="none" stroke="#a9aab8" stroke-width="1.800" cx="12" cy="12" r="9"/><circle fill="none" stroke="#a9aab8" stroke-width="1.800" cx="12" cy="12" r="3.600"/><path fill="none" stroke="#a9aab8" stroke-width="1.800" d="M12 1.500v2.500M12 20v2.500M1.500 12H4M20 12h2.500"/></svg>
<div style="left:0;top:0;width:931px;height:633px;overflow:hidden;"><div style="left:202.85px;top:169.7px;width:237px;height:121.4px;background:#181b1f;border:.6px solid rgba(204,204,220,0.12);border-radius:1.300px;"></div>
<div class="t" style="left:207.7px;top:174px;font-size:7.7px;color:#dcdce8;letter-spacing:0.43px;-webkit-text-stroke:.22px #dcdce8;">trident_backend_count</div>
<div style="left:405px;top:172.6px;width:29.600px;height:13.100px;border:.75px solid #4f7fd9;border-radius:1.300px;"></div>
<div class="t" style="left:409.85px;top:174px;font-size:6.6px;color:#6e9fff;font-weight:700;letter-spacing:0.09px;">Select</div>
<div class="t" style="left:208.79px;top:192px;font-size:6.9px;color:rgba(204,204,220,0.86);-webkit-text-stroke:0.14px rgba(204,204,220,0.86);letter-spacing:0.36px;">100 c/s</div>
<div class="t" style="left:212.99px;top:204px;font-size:6.9px;color:rgba(204,204,220,0.86);-webkit-text-stroke:0.14px rgba(204,204,220,0.86);letter-spacing:0.36px;">80 c/s</div>
<div class="t" style="left:212.99px;top:216px;font-size:6.9px;color:rgba(204,204,220,0.86);-webkit-text-stroke:0.14px rgba(204,204,220,0.86);letter-spacing:0.36px;">60 c/s</div>
<div class="t" style="left:212.99px;top:228px;font-size:6.9px;color:rgba(204,204,220,0.86);-webkit-text-stroke:0.14px rgba(204,204,220,0.86);letter-spacing:0.36px;">40 c/s</div>
<div class="t" style="left:212.99px;top:240px;font-size:6.9px;color:rgba(204,204,220,0.86);-webkit-text-stroke:0.14px rgba(204,204,220,0.86);letter-spacing:0.36px;">20 c/s</div>
<div class="t" style="left:217.19px;top:252px;font-size:6.9px;color:rgba(204,204,220,0.86);-webkit-text-stroke:0.14px rgba(204,204,220,0.86);letter-spacing:0.36px;">0 c/s</div>
<svg style="left:0;top:0;" width="931" height="639" viewBox="34 23 931 639"><path d="M270 220.05H464.3" stroke="rgba(204,204,220,0.17)" stroke-width=".6"/><path d="M270 232.12H464.3" stroke="rgba(204,204,220,0.17)" stroke-width=".6"/><path d="M270 244.19H464.3" stroke="rgba(204,204,220,0.17)" stroke-width=".6"/><path d="M270 256.26H464.3" stroke="rgba(204,204,220,0.17)" stroke-width=".6"/><path d="M270 268.33H464.3" stroke="rgba(204,204,220,0.17)" stroke-width=".6"/><path d="M270 280.4H464.3" stroke="rgba(204,204,220,0.17)" stroke-width=".6"/><path d="M301.3 220.05V282.4" stroke="rgba(204,204,220,0.17)" stroke-width=".6"/><path d="M333.7 220.05V282.4" stroke="rgba(204,204,220,0.17)" stroke-width=".6"/><path d="M366.1 220.05V282.4" stroke="rgba(204,204,220,0.17)" stroke-width=".6"/><path d="M398.5 220.05V282.4" stroke="rgba(204,204,220,0.17)" stroke-width=".6"/><path d="M430.9 220.05V282.4" stroke="rgba(204,204,220,0.17)" stroke-width=".6"/><path d="M463.3 220.05V282.4" stroke="rgba(204,204,220,0.17)" stroke-width=".6"/><path d="M439.16 220.05V280.4" stroke="rgba(204,204,220,.46)" stroke-width=".6" stroke-dasharray="1.600 1.700"/><path d="M270 263.8H464.3" stroke="rgba(204,204,220,.46)" stroke-width=".6" stroke-dasharray="1.600 1.700"/><path d="M270 280.4 L464.27 280.4" fill="none" stroke="#73bf69" stroke-width="0.9" stroke-linejoin="round"/><circle cx="439.16" cy="280.4" r="2.400" fill="#73bf69"/></svg>
<div style="left:0;top:0;width:434.8px;height:639px;overflow:hidden;">
<div class="t" style="left:257.6px;top:261px;font-size:6.9px;color:rgba(204,204,220,0.86);-webkit-text-stroke:0.14px rgba(204,204,220,0.86);letter-spacing:0.51px;">14:00</div>
<div class="t" style="left:290px;top:261px;font-size:6.9px;color:rgba(204,204,220,0.86);-webkit-text-stroke:0.14px rgba(204,204,220,0.86);letter-spacing:0.51px;">14:10</div>
<div class="t" style="left:322.4px;top:261px;font-size:6.9px;color:rgba(204,204,220,0.86);-webkit-text-stroke:0.14px rgba(204,204,220,0.86);letter-spacing:0.51px;">14:20</div>
<div class="t" style="left:354.8px;top:261px;font-size:6.9px;color:rgba(204,204,220,0.86);-webkit-text-stroke:0.14px rgba(204,204,220,0.86);letter-spacing:0.51px;">14:30</div>
<div class="t" style="left:387.2px;top:261px;font-size:6.9px;color:rgba(204,204,220,0.86);-webkit-text-stroke:0.14px rgba(204,204,220,0.86);letter-spacing:0.51px;">14:40</div>
<div class="t" style="left:419.6px;top:261px;font-size:6.9px;color:rgba(204,204,220,0.86);-webkit-text-stroke:0.14px rgba(204,204,220,0.86);letter-spacing:0.51px;">14:50</div>
</div>
<div style="left:209.9px;top:277.7px;width:8.200px;height:2.200px;border-radius:1.100px;background:#73bf69;"></div>
<div class="t" style="left:222.2px;top:274px;font-size:6.7px;color:rgba(204,204,220,0.82);-webkit-text-stroke:0.1px rgba(204,204,220,0.82);letter-spacing:0.26px;">sum(rate)</div>
<div style="left:444.15px;top:169.7px;width:237px;height:121.4px;background:#181b1f;border:.6px solid rgba(204,204,220,0.12);border-radius:1.300px;"></div>
<div class="t" style="left:449px;top:174px;font-size:7.7px;color:#dcdce8;letter-spacing:0.4px;-webkit-text-stroke:.22px #dcdce8;">trident_backend_info</div>
<div style="left:646.3px;top:172.6px;width:29.600px;height:13.100px;border:.75px solid #4f7fd9;border-radius:1.300px;"></div>
<div class="t" style="left:651.15px;top:174px;font-size:6.6px;color:#6e9fff;font-weight:700;letter-spacing:0.09px;">Select</div>
<div class="t" style="left:457.26px;top:192px;font-size:6.9px;color:rgba(204,204,220,0.86);-webkit-text-stroke:0.14px rgba(204,204,220,0.86);letter-spacing:0.36px;">2</div>
<div class="t" style="left:450.79px;top:207px;font-size:6.9px;color:rgba(204,204,220,0.86);-webkit-text-stroke:0.14px rgba(204,204,220,0.86);letter-spacing:0.36px;">1.5</div>
<div class="t" style="left:457.26px;top:222px;font-size:6.9px;color:rgba(204,204,220,0.86);-webkit-text-stroke:0.14px rgba(204,204,220,0.86);letter-spacing:0.36px;">1</div>
<div class="t" style="left:450.79px;top:237px;font-size:6.9px;color:rgba(204,204,220,0.86);-webkit-text-stroke:0.14px rgba(204,204,220,0.86);letter-spacing:0.36px;">0.5</div>
<div class="t" style="left:457.26px;top:252px;font-size:6.9px;color:rgba(204,204,220,0.86);-webkit-text-stroke:0.14px rgba(204,204,220,0.86);letter-spacing:0.36px;">0</div>
<svg style="left:0;top:0;" width="931" height="639" viewBox="34 23 931 639"><path d="M498.3 220.05H705" stroke="rgba(204,204,220,0.17)" stroke-width=".6"/><path d="M498.3 235.13H705" stroke="rgba(204,204,220,0.17)" stroke-width=".6"/><path d="M498.3 250.21H705" stroke="rgba(204,204,220,0.17)" stroke-width=".6"/><path d="M498.3 265.29H705" stroke="rgba(204,204,220,0.17)" stroke-width=".6"/><path d="M498.3 280.37H705" stroke="rgba(204,204,220,0.17)" stroke-width=".6"/><path d="M532.1 220.05V282.37" stroke="rgba(204,204,220,0.17)" stroke-width=".6"/><path d="M566.55 220.05V282.37" stroke="rgba(204,204,220,0.17)" stroke-width=".6"/><path d="M601 220.05V282.37" stroke="rgba(204,204,220,0.17)" stroke-width=".6"/><path d="M635.45 220.05V282.37" stroke="rgba(204,204,220,0.17)" stroke-width=".6"/><path d="M669.9 220.05V282.37" stroke="rgba(204,204,220,0.17)" stroke-width=".6"/><path d="M704.35 220.05V282.37" stroke="rgba(204,204,220,0.17)" stroke-width=".6"/><path d="M678.68 220.05V280.37" stroke="rgba(204,204,220,.46)" stroke-width=".6" stroke-dasharray="1.600 1.700"/><path d="M498.3 263.8H705" stroke="rgba(204,204,220,.46)" stroke-width=".6" stroke-dasharray="1.600 1.700"/><path d="M498.51 250.37 L705 250.37 L705 280.37 L498.51 280.37Z" fill="#e0bc0b" fill-opacity="0.12" stroke="none"/><path d="M498.51 250.37 L705 250.37" fill="none" stroke="#e0bc0b" stroke-width="0.8" stroke-linejoin="round"/><circle cx="678.68" cy="250.37" r="2.400" fill="#e0bc0b"/></svg>
<div style="left:0;top:0;width:676.1px;height:639px;overflow:hidden;">
<div class="t" style="left:488.4px;top:261px;font-size:6.9px;color:rgba(204,204,220,0.86);-webkit-text-stroke:0.14px rgba(204,204,220,0.86);letter-spacing:0.51px;">14:00</div>
<div class="t" style="left:522.85px;top:261px;font-size:6.9px;color:rgba(204,204,220,0.86);-webkit-text-stroke:0.14px rgba(204,204,220,0.86);letter-spacing:0.51px;">14:10</div>
<div class="t" style="left:557.3px;top:261px;font-size:6.9px;color:rgba(204,204,220,0.86);-webkit-text-stroke:0.14px rgba(204,204,220,0.86);letter-spacing:0.51px;">14:20</div>
<div class="t" style="left:591.75px;top:261px;font-size:6.9px;color:rgba(204,204,220,0.86);-webkit-text-stroke:0.14px rgba(204,204,220,0.86);letter-spacing:0.51px;">14:30</div>
<div class="t" style="left:626.2px;top:261px;font-size:6.9px;color:rgba(204,204,220,0.86);-webkit-text-stroke:0.14px rgba(204,204,220,0.86);letter-spacing:0.51px;">14:40</div>
<div class="t" style="left:660.65px;top:261px;font-size:6.9px;color:rgba(204,204,220,0.86);-webkit-text-stroke:0.14px rgba(204,204,220,0.86);letter-spacing:0.51px;">14:50</div>
</div>
<div style="left:451.2px;top:277.7px;width:8.200px;height:2.200px;border-radius:1.100px;background:#e0bc0b;"></div>
<div class="t" style="left:463.5px;top:274px;font-size:6.7px;color:rgba(204,204,220,0.82);-webkit-text-stroke:0.1px rgba(204,204,220,0.82);letter-spacing:0.33px;">avg</div>
<div style="left:685.45px;top:169.7px;width:237px;height:121.4px;background:#181b1f;border:.6px solid rgba(204,204,220,0.12);border-radius:1.300px;"></div>
<div class="t" style="left:690.3px;top:174px;font-size:7.7px;color:#dcdce8;letter-spacing:0.37px;-webkit-text-stroke:.22px #dcdce8;">trident_build_info</div>
<div style="left:887.6px;top:172.6px;width:29.600px;height:13.100px;border:.75px solid #4f7fd9;border-radius:1.300px;"></div>
<div class="t" style="left:892.45px;top:174px;font-size:6.6px;color:#6e9fff;font-weight:700;letter-spacing:0.09px;">Select</div>
<div class="t" style="left:698.46px;top:192px;font-size:6.9px;color:rgba(204,204,220,0.86);-webkit-text-stroke:0.14px rgba(204,204,220,0.86);letter-spacing:0.36px;">2</div>
<div class="t" style="left:691.99px;top:207px;font-size:6.9px;color:rgba(204,204,220,0.86);-webkit-text-stroke:0.14px rgba(204,204,220,0.86);letter-spacing:0.36px;">1.5</div>
<div class="t" style="left:698.46px;top:222px;font-size:6.9px;color:rgba(204,204,220,0.86);-webkit-text-stroke:0.14px rgba(204,204,220,0.86);letter-spacing:0.36px;">1</div>
<div class="t" style="left:691.99px;top:237px;font-size:6.9px;color:rgba(204,204,220,0.86);-webkit-text-stroke:0.14px rgba(204,204,220,0.86);letter-spacing:0.36px;">0.5</div>
<div class="t" style="left:698.46px;top:252px;font-size:6.9px;color:rgba(204,204,220,0.86);-webkit-text-stroke:0.14px rgba(204,204,220,0.86);letter-spacing:0.36px;">0</div>
<svg style="left:0;top:0;" width="931" height="639" viewBox="34 23 931 639"><path d="M739.3 220.05H945.8" stroke="rgba(204,204,220,0.17)" stroke-width=".6"/><path d="M739.3 235.13H945.8" stroke="rgba(204,204,220,0.17)" stroke-width=".6"/><path d="M739.3 250.21H945.8" stroke="rgba(204,204,220,0.17)" stroke-width=".6"/><path d="M739.3 265.29H945.8" stroke="rgba(204,204,220,0.17)" stroke-width=".6"/><path d="M739.3 280.37H945.8" stroke="rgba(204,204,220,0.17)" stroke-width=".6"/><path d="M773.25 220.05V282.37" stroke="rgba(204,204,220,0.17)" stroke-width=".6"/><path d="M807.65 220.05V282.37" stroke="rgba(204,204,220,0.17)" stroke-width=".6"/><path d="M842.05 220.05V282.37" stroke="rgba(204,204,220,0.17)" stroke-width=".6"/><path d="M876.45 220.05V282.37" stroke="rgba(204,204,220,0.17)" stroke-width=".6"/><path d="M910.85 220.05V282.37" stroke="rgba(204,204,220,0.17)" stroke-width=".6"/><path d="M945.25 220.05V282.37" stroke="rgba(204,204,220,0.17)" stroke-width=".6"/><path d="M919.62 220.05V280.37" stroke="rgba(204,204,220,.46)" stroke-width=".6" stroke-dasharray="1.600 1.700"/><path d="M739.3 263.8H945.8" stroke="rgba(204,204,220,.46)" stroke-width=".6" stroke-dasharray="1.600 1.700"/><path d="M739.71 250.37 L945.8 250.37 L945.8 280.37 L739.71 280.37Z" fill="#8ab8ff" fill-opacity="0.1" stroke="none"/><path d="M739.71 250.37 L945.8 250.37" fill="none" stroke="#8ab8ff" stroke-width="0.8" stroke-linejoin="round"/><circle cx="919.62" cy="250.37" r="2.400" fill="#8ab8ff"/></svg>
<div style="left:0;top:0;width:917.4px;height:639px;overflow:hidden;">
<div class="t" style="left:729.55px;top:261px;font-size:6.9px;color:rgba(204,204,220,0.86);-webkit-text-stroke:0.14px rgba(204,204,220,0.86);letter-spacing:0.51px;">14:00</div>
<div class="t" style="left:763.95px;top:261px;font-size:6.9px;color:rgba(204,204,220,0.86);-webkit-text-stroke:0.14px rgba(204,204,220,0.86);letter-spacing:0.51px;">14:10</div>
<div class="t" style="left:798.35px;top:261px;font-size:6.9px;color:rgba(204,204,220,0.86);-webkit-text-stroke:0.14px rgba(204,204,220,0.86);letter-spacing:0.51px;">14:20</div>
<div class="t" style="left:832.75px;top:261px;font-size:6.9px;color:rgba(204,204,220,0.86);-webkit-text-stroke:0.14px rgba(204,204,220,0.86);letter-spacing:0.51px;">14:30</div>
<div class="t" style="left:867.15px;top:261px;font-size:6.9px;color:rgba(204,204,220,0.86);-webkit-text-stroke:0.14px rgba(204,204,220,0.86);letter-spacing:0.51px;">14:40</div>
<div class="t" style="left:901.55px;top:261px;font-size:6.9px;color:rgba(204,204,220,0.86);-webkit-text-stroke:0.14px rgba(204,204,220,0.86);letter-spacing:0.51px;">14:50</div>
</div>
<div style="left:692.5px;top:277.7px;width:8.200px;height:2.200px;border-radius:1.100px;background:#8ab8ff;"></div>
<div class="t" style="left:704.8px;top:274px;font-size:6.7px;color:rgba(204,204,220,0.82);-webkit-text-stroke:0.1px rgba(204,204,220,0.82);letter-spacing:0.33px;">avg</div>
<div style="left:202.85px;top:295.85px;width:237px;height:121.4px;background:#181b1f;border:.6px solid rgba(204,204,220,0.12);border-radius:1.300px;"></div>
<div class="t" style="left:207.7px;top:300px;font-size:7.7px;color:#dcdce8;letter-spacing:0.41px;-webkit-text-stroke:.22px #dcdce8;">trident_node_count</div>
<div style="left:405px;top:298.75px;width:29.600px;height:13.100px;border:.75px solid #4f7fd9;border-radius:1.300px;"></div>
<div class="t" style="left:409.85px;top:301px;font-size:6.6px;color:#6e9fff;font-weight:700;letter-spacing:0.09px;">Select</div>
<div class="t" style="left:208.79px;top:318px;font-size:6.9px;color:rgba(204,204,220,0.86);-webkit-text-stroke:0.14px rgba(204,204,220,0.86);letter-spacing:0.36px;">100 c/s</div>
<div class="t" style="left:212.99px;top:330px;font-size:6.9px;color:rgba(204,204,220,0.86);-webkit-text-stroke:0.14px rgba(204,204,220,0.86);letter-spacing:0.36px;">80 c/s</div>
<div class="t" style="left:212.99px;top:342px;font-size:6.9px;color:rgba(204,204,220,0.86);-webkit-text-stroke:0.14px rgba(204,204,220,0.86);letter-spacing:0.36px;">60 c/s</div>
<div class="t" style="left:212.99px;top:354px;font-size:6.9px;color:rgba(204,204,220,0.86);-webkit-text-stroke:0.14px rgba(204,204,220,0.86);letter-spacing:0.36px;">40 c/s</div>
<div class="t" style="left:212.99px;top:366px;font-size:6.9px;color:rgba(204,204,220,0.86);-webkit-text-stroke:0.14px rgba(204,204,220,0.86);letter-spacing:0.36px;">20 c/s</div>
<div class="t" style="left:217.19px;top:378px;font-size:6.9px;color:rgba(204,204,220,0.86);-webkit-text-stroke:0.14px rgba(204,204,220,0.86);letter-spacing:0.36px;">0 c/s</div>
<svg style="left:0;top:0;" width="931" height="639" viewBox="34 23 931 639"><path d="M270 346.2H464.3" stroke="rgba(204,204,220,0.17)" stroke-width=".6"/><path d="M270 358.27H464.3" stroke="rgba(204,204,220,0.17)" stroke-width=".6"/><path d="M270 370.34H464.3" stroke="rgba(204,204,220,0.17)" stroke-width=".6"/><path d="M270 382.41H464.3" stroke="rgba(204,204,220,0.17)" stroke-width=".6"/><path d="M270 394.48H464.3" stroke="rgba(204,204,220,0.17)" stroke-width=".6"/><path d="M270 406.55H464.3" stroke="rgba(204,204,220,0.17)" stroke-width=".6"/><path d="M301.3 346.2V408.55" stroke="rgba(204,204,220,0.17)" stroke-width=".6"/><path d="M333.7 346.2V408.55" stroke="rgba(204,204,220,0.17)" stroke-width=".6"/><path d="M366.1 346.2V408.55" stroke="rgba(204,204,220,0.17)" stroke-width=".6"/><path d="M398.5 346.2V408.55" stroke="rgba(204,204,220,0.17)" stroke-width=".6"/><path d="M430.9 346.2V408.55" stroke="rgba(204,204,220,0.17)" stroke-width=".6"/><path d="M463.3 346.2V408.55" stroke="rgba(204,204,220,0.17)" stroke-width=".6"/><path d="M439.16 346.2V406.55" stroke="rgba(204,204,220,.46)" stroke-width=".6" stroke-dasharray="1.600 1.700"/><path d="M270 389.95H464.3" stroke="rgba(204,204,220,.46)" stroke-width=".6" stroke-dasharray="1.600 1.700"/><path d="M270 406.55 L464.27 406.55" fill="none" stroke="#ff780a" stroke-width="0.9" stroke-linejoin="round"/><circle cx="439.16" cy="406.55" r="2.400" fill="#ff780a"/></svg>
<div style="left:0;top:0;width:434.8px;height:639px;overflow:hidden;">
<div class="t" style="left:257.6px;top:387px;font-size:6.9px;color:rgba(204,204,220,0.86);-webkit-text-stroke:0.14px rgba(204,204,220,0.86);letter-spacing:0.51px;">14:00</div>
<div class="t" style="left:290px;top:387px;font-size:6.9px;color:rgba(204,204,220,0.86);-webkit-text-stroke:0.14px rgba(204,204,220,0.86);letter-spacing:0.51px;">14:10</div>
<div class="t" style="left:322.4px;top:387px;font-size:6.9px;color:rgba(204,204,220,0.86);-webkit-text-stroke:0.14px rgba(204,204,220,0.86);letter-spacing:0.51px;">14:20</div>
<div class="t" style="left:354.8px;top:387px;font-size:6.9px;color:rgba(204,204,220,0.86);-webkit-text-stroke:0.14px rgba(204,204,220,0.86);letter-spacing:0.51px;">14:30</div>
<div class="t" style="left:387.2px;top:387px;font-size:6.9px;color:rgba(204,204,220,0.86);-webkit-text-stroke:0.14px rgba(204,204,220,0.86);letter-spacing:0.51px;">14:40</div>
<div class="t" style="left:419.6px;top:387px;font-size:6.9px;color:rgba(204,204,220,0.86);-webkit-text-stroke:0.14px rgba(204,204,220,0.86);letter-spacing:0.51px;">14:50</div>
</div>
<div style="left:209.9px;top:403.85px;width:8.200px;height:2.200px;border-radius:1.100px;background:#ff780a;"></div>
<div class="t" style="left:222.2px;top:400px;font-size:6.7px;color:rgba(204,204,220,0.82);-webkit-text-stroke:0.1px rgba(204,204,220,0.82);letter-spacing:0.26px;">sum(rate)</div>
<div style="left:444.15px;top:295.85px;width:237px;height:121.4px;background:#181b1f;border:.6px solid rgba(204,204,220,0.12);border-radius:1.300px;"></div>
<div class="t" style="left:449px;top:300px;font-size:7.7px;color:#dcdce8;letter-spacing:0.38px;-webkit-text-stroke:.22px #dcdce8;">trident_operation_duration_milliseconds</div>
<div style="left:646.3px;top:298.75px;width:29.600px;height:13.100px;border:.75px solid #4f7fd9;border-radius:1.300px;"></div>
<div class="t" style="left:651.15px;top:301px;font-size:6.6px;color:#6e9fff;font-weight:700;letter-spacing:0.09px;">Select</div>
<svg style="left:0;top:0;" width="931" height="639" viewBox="34 23 931 639"><path d="M522.5 341.55V409.75" stroke="rgba(204,204,220,0.17)" stroke-width=".6"/><path d="M558.65 341.55V409.75" stroke="rgba(204,204,220,0.17)" stroke-width=".6"/><path d="M594.8 341.55V409.75" stroke="rgba(204,204,220,0.17)" stroke-width=".6"/><path d="M630.95 341.55V409.75" stroke="rgba(204,204,220,0.17)" stroke-width=".6"/><path d="M667.1 341.55V409.75" stroke="rgba(204,204,220,0.17)" stroke-width=".6"/><path d="M703.25 341.55V409.75" stroke="rgba(204,204,220,0.17)" stroke-width=".6"/><path d="M676.32 341.55V406.85" stroke="rgba(204,204,220,.46)" stroke-width=".6" stroke-dasharray="1.600 1.700"/><path d="M487 388.25H705" stroke="rgba(204,204,220,.46)" stroke-width=".6" stroke-dasharray="1.600 1.700"/></svg>
<div style="left:0;top:0;width:676.1px;height:639px;overflow:hidden;">
<div class="t" style="left:478.8px;top:388px;font-size:6.9px;color:rgba(204,204,220,0.86);-webkit-text-stroke:0.14px rgba(204,204,220,0.86);letter-spacing:0.51px;">14:00</div>
<div class="t" style="left:514.95px;top:388px;font-size:6.9px;color:rgba(204,204,220,0.86);-webkit-text-stroke:0.14px rgba(204,204,220,0.86);letter-spacing:0.51px;">14:10</div>
<div class="t" style="left:551.1px;top:388px;font-size:6.9px;color:rgba(204,204,220,0.86);-webkit-text-stroke:0.14px rgba(204,204,220,0.86);letter-spacing:0.51px;">14:20</div>
<div class="t" style="left:587.25px;top:388px;font-size:6.9px;color:rgba(204,204,220,0.86);-webkit-text-stroke:0.14px rgba(204,204,220,0.86);letter-spacing:0.51px;">14:30</div>
<div class="t" style="left:623.4px;top:388px;font-size:6.9px;color:rgba(204,204,220,0.86);-webkit-text-stroke:0.14px rgba(204,204,220,0.86);letter-spacing:0.51px;">14:40</div>
<div class="t" style="left:659.55px;top:388px;font-size:6.9px;color:rgba(204,204,220,0.86);-webkit-text-stroke:0.14px rgba(204,204,220,0.86);letter-spacing:0.51px;">14:50</div>
</div>
<div style="left:451.2px;top:403.85px;width:8.200px;height:2.200px;border-radius:1.100px;background:#f2495c;"></div>
<div class="t" style="left:463.5px;top:400px;font-size:6.7px;color:rgba(204,204,220,0.82);-webkit-text-stroke:0.1px rgba(204,204,220,0.82);letter-spacing:0.33px;">avg</div>
<div style="left:685.45px;top:295.85px;width:237px;height:121.4px;background:#181b1f;border:.6px solid rgba(204,204,220,0.12);border-radius:1.300px;"></div>
<div class="t" style="left:690.3px;top:300px;font-size:7.7px;color:#dcdce8;letter-spacing:0.37px;-webkit-text-stroke:.22px #dcdce8;">trident_operation_duration_milliseconds_count</div>
<div style="left:887.6px;top:298.75px;width:29.600px;height:13.100px;border:.75px solid #4f7fd9;border-radius:1.300px;"></div>
<div class="t" style="left:892.45px;top:301px;font-size:6.6px;color:#6e9fff;font-weight:700;letter-spacing:0.09px;">Select</div>
<div class="t" style="left:691.81px;top:317px;font-size:6.9px;color:rgba(204,204,220,0.86);-webkit-text-stroke:0.14px rgba(204,204,220,0.86);letter-spacing:0.36px;">0.4 c/s</div>
<div class="t" style="left:691.81px;top:333px;font-size:6.9px;color:rgba(204,204,220,0.86);-webkit-text-stroke:0.14px rgba(204,204,220,0.86);letter-spacing:0.36px;">0.3 c/s</div>
<div class="t" style="left:691.81px;top:348px;font-size:6.9px;color:rgba(204,204,220,0.86);-webkit-text-stroke:0.14px rgba(204,204,220,0.86);letter-spacing:0.36px;">0.2 c/s</div>
<div class="t" style="left:691.81px;top:364px;font-size:6.9px;color:rgba(204,204,220,0.86);-webkit-text-stroke:0.14px rgba(204,204,220,0.86);letter-spacing:0.36px;">0.1 c/s</div>
<div class="t" style="left:698.29px;top:379px;font-size:6.9px;color:rgba(204,204,220,0.86);-webkit-text-stroke:0.14px rgba(204,204,220,0.86);letter-spacing:0.36px;">0 c/s</div>
<svg style="left:0;top:0;" width="931" height="639" viewBox="34 23 931 639"><path d="M751.3 345.4H946.3" stroke="rgba(204,204,220,0.17)" stroke-width=".6"/><path d="M751.3 360.9H946.3" stroke="rgba(204,204,220,0.17)" stroke-width=".6"/><path d="M751.3 376.4H946.3" stroke="rgba(204,204,220,0.17)" stroke-width=".6"/><path d="M751.3 391.9H946.3" stroke="rgba(204,204,220,0.17)" stroke-width=".6"/><path d="M751.3 407.4H946.3" stroke="rgba(204,204,220,0.17)" stroke-width=".6"/><path d="M782.5 345.4V409.4" stroke="rgba(204,204,220,0.17)" stroke-width=".6"/><path d="M815.05 345.4V409.4" stroke="rgba(204,204,220,0.17)" stroke-width=".6"/><path d="M847.6 345.4V409.4" stroke="rgba(204,204,220,0.17)" stroke-width=".6"/><path d="M880.15 345.4V409.4" stroke="rgba(204,204,220,0.17)" stroke-width=".6"/><path d="M912.7 345.4V409.4" stroke="rgba(204,204,220,0.17)" stroke-width=".6"/><path d="M945.25 345.4V409.4" stroke="rgba(204,204,220,0.17)" stroke-width=".6"/><path d="M921 345.4V407.4" stroke="rgba(204,204,220,.46)" stroke-width=".6" stroke-dasharray="1.600 1.700"/><path d="M751.3 389.95H946.3" stroke="rgba(204,204,220,.46)" stroke-width=".6" stroke-dasharray="1.600 1.700"/><path d="M751.3 401.27 L751.58 400.74 L752.39 401.27 L753.21 407.4 L753.21 407.4 L754.02 401.27 L754.83 400.74 L755.65 401.27 L756.46 407.4 L756.46 407.4 L757.27 401.27 L758.09 400.74 L758.9 401.27 L759.72 407.4 L759.72 407.4 L760.53 401.27 L761.34 400.74 L762.16 401.27 L762.97 407.4 L762.97 407.4 L763.78 401.27 L764.6 400.74 L765.41 401.27 L766.23 407.4 L766.23 407.4 L767.04 401.27 L767.85 400.74 L768.67 401.27 L769.48 407.4 L769.48 407.4 L770.29 401.27 L771.11 400.74 L771.92 401.27 L772.74 407.4 L772.74 407.4 L773.55 401.27 L774.36 400.74 L775.18 401.27 L775.99 407.4 L775.99 407.4 L776.8 401.27 L777.62 400.74 L778.43 401.27 L779.25 407.4 L779.25 407.4 L780.06 401.27 L780.87 400.74 L781.69 401.27 L782.5 407.4 L782.5 407.4 L783.31 401.27 L784.13 400.74 L784.94 401.27 L785.75 407.4 L785.75 407.4 L786.57 401.27 L787.38 400.74 L788.2 401.27 L789.01 407.4 L789.01 407.4 L789.82 401.27 L790.64 400.74 L791.45 401.27 L792.26 407.4 L792.26 407.4 L793.08 401.27 L793.89 400.74 L794.71 401.27 L795.52 407.4 L795.52 407.4 L796.33 401.27 L797.15 400.74 L797.96 401.27 L798.77 407.4 L798.77 407.4 L799.59 401.27 L800.4 400.74 L801.22 401.27 L802.03 407.4 L802.03 407.4 L802.84 401.27 L803.66 400.74 L804.47 401.27 L805.28 407.4 L805.28 407.4 L806.1 401.27 L806.91 400.74 L807.73 401.27 L808.54 407.4 L808.54 407.4 L809.35 401.27 L810.17 400.74 L810.98 401.27 L811.79 407.4 L811.79 407.4 L812.61 401.27 L813.42 400.74 L814.24 401.27 L815.05 407.4 L815.05 407.4 L815.86 401.27 L816.68 400.74 L817.49 401.27 L818.3 407.4 L818.3 407.4 L819.12 401.27 L819.93 400.74 L820.75 401.27 L821.56 407.4 L821.56 407.4 L822.37 401.27 L823.19 400.74 L824 401.27 L824.82 407.4 L824.82 407.4 L825.63 401.27 L826.44 400.74 L827.26 401.27 L828.07 407.4 L828.07 407.4 L828.88 401.27 L829.7 400.74 L830.51 401.27 L831.33 407.4 L831.33 407.4 L832.14 401.27 L832.95 400.74 L833.77 401.27 L834.58 407.4 L834.58 407.4 L835.39 401.27 L836.21 400.74 L837.02 401.27 L837.84 407.4 L837.84 407.4 L838.65 401.27 L839.46 400.74 L840.28 401.27 L841.09 407.4 L841.09 407.4 L841.9 401.27 L842.72 400.74 L843.53 401.27 L844.35 407.4 L844.35 407.4 L845.16 401.27 L845.97 400.74 L846.79 401.27 L847.6 407.4 L847.6 407.4 L848.41 401.27 L849.23 400.74 L850.04 401.27 L850.86 407.4 L850.86 407.4 L851.67 401.27 L852.48 400.74 L853.3 401.27 L854.11 407.4 L854.11 407.4 L854.92 401.27 L855.74 400.74 L856.55 401.27 L857.37 407.4 L857.37 407.4 L858.18 401.27 L858.99 400.74 L859.81 401.27 L860.62 407.4 L860.62 407.4 L861.43 401.27 L862.25 400.74 L863.06 401.27 L863.88 407.4 L863.88 407.4 L864.69 401.27 L865.5 400.74 L866.32 401.27 L867.13 407.4 L867.13 407.4 L867.94 401.27 L868.76 400.74 L869.57 401.27 L870.38 407.4 L870.38 407.4 L871.2 401.27 L872.01 400.74 L872.83 401.27 L873.64 407.4 L873.64 407.4 L874.45 401.27 L875.27 400.74 L876.08 401.27 L876.89 407.4 L876.89 407.4 L877.71 401.27 L878.52 400.74 L879.34 401.27 L880.15 407.4 L880.15 407.4 L880.96 401.27 L881.78 400.74 L882.59 401.27 L883.4 407.4 L883.4 407.4 L884.22 401.27 L885.03 400.74 L885.85 401.27 L886.66 407.4 L886.66 407.4 L887.47 401.27 L888.29 400.74 L889.1 401.27 L889.91 407.4 L889.91 407.4 L890.73 401.27 L891.54 400.74 L892.36 401.27 L893.17 407.4 L893.17 407.4 L893.98 401.27 L894.8 400.74 L895.61 401.27 L896.42 407.4 L896.42 407.4 L897.24 401.27 L898.05 400.74 L898.87 401.27 L899.68 407.4 L899.68 407.4 L900.49 401.27 L901.31 400.74 L902.12 401.27 L902.93 407.4 L904.4 407.4 L907.17 352.07 L908.63 368.65 L909.44 407.4 L909.44 407.4 L910.26 398.49 L911.07 397.71 L911.89 398.49 L912.7 407.4 L912.7 407.4 L913.51 398.49 L914.33 397.71 L915.14 398.49 L915.95 407.4 L915.95 407.4 L916.77 398.49 L917.58 397.71 L918.4 398.49 L919.21 407.4 L919.21 407.4 L920.02 398.49 L920.84 397.71 L921.65 398.49 L922.46 407.4 L922.46 407.4 L923.28 398.49 L924.09 397.71 L924.91 398.49 L925.72 407.4 L925.72 407.4 L926.53 398.49 L927.35 397.71 L928.16 398.49 L928.97 407.4 L928.97 407.4 L929.79 398.49 L930.6 397.71 L931.42 398.49 L932.23 407.4 L932.23 407.4 L933.04 398.49 L933.86 397.71 L934.67 398.49 L935.49 407.4 L935.49 407.4 L936.3 398.49 L937.11 397.71 L937.93 398.49 L938.74 407.4 L938.74 407.4 L939.55 398.49 L940.37 397.71 L941.18 398.49 L942 407.4 L942 407.4 L942.81 398.49 L943.62 397.71 L944.44 398.49 L945.25 407.4 L945.25 407.4 L946.06 398.49 L946.06 407.4 L751.3 407.4Z" fill="#5794f2" fill-opacity="0.28" stroke="none"/><path d="M751.3 401.27 L751.58 400.74 L752.39 401.27 L753.21 407.4 L753.21 407.4 L754.02 401.27 L754.83 400.74 L755.65 401.27 L756.46 407.4 L756.46 407.4 L757.27 401.27 L758.09 400.74 L758.9 401.27 L759.72 407.4 L759.72 407.4 L760.53 401.27 L761.34 400.74 L762.16 401.27 L762.97 407.4 L762.97 407.4 L763.78 401.27 L764.6 400.74 L765.41 401.27 L766.23 407.4 L766.23 407.4 L767.04 401.27 L767.85 400.74 L768.67 401.27 L769.48 407.4 L769.48 407.4 L770.29 401.27 L771.11 400.74 L771.92 401.27 L772.74 407.4 L772.74 407.4 L773.55 401.27 L774.36 400.74 L775.18 401.27 L775.99 407.4 L775.99 407.4 L776.8 401.27 L777.62 400.74 L778.43 401.27 L779.25 407.4 L779.25 407.4 L780.06 401.27 L780.87 400.74 L781.69 401.27 L782.5 407.4 L782.5 407.4 L783.31 401.27 L784.13 400.74 L784.94 401.27 L785.75 407.4 L785.75 407.4 L786.57 401.27 L787.38 400.74 L788.2 401.27 L789.01 407.4 L789.01 407.4 L789.82 401.27 L790.64 400.74 L791.45 401.27 L792.26 407.4 L792.26 407.4 L793.08 401.27 L793.89 400.74 L794.71 401.27 L795.52 407.4 L795.52 407.4 L796.33 401.27 L797.15 400.74 L797.96 401.27 L798.77 407.4 L798.77 407.4 L799.59 401.27 L800.4 400.74 L801.22 401.27 L802.03 407.4 L802.03 407.4 L802.84 401.27 L803.66 400.74 L804.47 401.27 L805.28 407.4 L805.28 407.4 L806.1 401.27 L806.91 400.74 L807.73 401.27 L808.54 407.4 L808.54 407.4 L809.35 401.27 L810.17 400.74 L810.98 401.27 L811.79 407.4 L811.79 407.4 L812.61 401.27 L813.42 400.74 L814.24 401.27 L815.05 407.4 L815.05 407.4 L815.86 401.27 L816.68 400.74 L817.49 401.27 L818.3 407.4 L818.3 407.4 L819.12 401.27 L819.93 400.74 L820.75 401.27 L821.56 407.4 L821.56 407.4 L822.37 401.27 L823.19 400.74 L824 401.27 L824.82 407.4 L824.82 407.4 L825.63 401.27 L826.44 400.74 L827.26 401.27 L828.07 407.4 L828.07 407.4 L828.88 401.27 L829.7 400.74 L830.51 401.27 L831.33 407.4 L831.33 407.4 L832.14 401.27 L832.95 400.74 L833.77 401.27 L834.58 407.4 L834.58 407.4 L835.39 401.27 L836.21 400.74 L837.02 401.27 L837.84 407.4 L837.84 407.4 L838.65 401.27 L839.46 400.74 L840.28 401.27 L841.09 407.4 L841.09 407.4 L841.9 401.27 L842.72 400.74 L843.53 401.27 L844.35 407.4 L844.35 407.4 L845.16 401.27 L845.97 400.74 L846.79 401.27 L847.6 407.4 L847.6 407.4 L848.41 401.27 L849.23 400.74 L850.04 401.27 L850.86 407.4 L850.86 407.4 L851.67 401.27 L852.48 400.74 L853.3 401.27 L854.11 407.4 L854.11 407.4 L854.92 401.27 L855.74 400.74 L856.55 401.27 L857.37 407.4 L857.37 407.4 L858.18 401.27 L858.99 400.74 L859.81 401.27 L860.62 407.4 L860.62 407.4 L861.43 401.27 L862.25 400.74 L863.06 401.27 L863.88 407.4 L863.88 407.4 L864.69 401.27 L865.5 400.74 L866.32 401.27 L867.13 407.4 L867.13 407.4 L867.94 401.27 L868.76 400.74 L869.57 401.27 L870.38 407.4 L870.38 407.4 L871.2 401.27 L872.01 400.74 L872.83 401.27 L873.64 407.4 L873.64 407.4 L874.45 401.27 L875.27 400.74 L876.08 401.27 L876.89 407.4 L876.89 407.4 L877.71 401.27 L878.52 400.74 L879.34 401.27 L880.15 407.4 L880.15 407.4 L880.96 401.27 L881.78 400.74 L882.59 401.27 L883.4 407.4 L883.4 407.4 L884.22 401.27 L885.03 400.74 L885.85 401.27 L886.66 407.4 L886.66 407.4 L887.47 401.27 L888.29 400.74 L889.1 401.27 L889.91 407.4 L889.91 407.4 L890.73 401.27 L891.54 400.74 L892.36 401.27 L893.17 407.4 L893.17 407.4 L893.98 401.27 L894.8 400.74 L895.61 401.27 L896.42 407.4 L896.42 407.4 L897.24 401.27 L898.05 400.74 L898.87 401.27 L899.68 407.4 L899.68 407.4 L900.49 401.27 L901.31 400.74 L902.12 401.27 L902.93 407.4 L904.4 407.4 L907.17 352.07 L908.63 368.65 L909.44 407.4 L909.44 407.4 L910.26 398.49 L911.07 397.71 L911.89 398.49 L912.7 407.4 L912.7 407.4 L913.51 398.49 L914.33 397.71 L915.14 398.49 L915.95 407.4 L915.95 407.4 L916.77 398.49 L917.58 397.71 L918.4 398.49 L919.21 407.4 L919.21 407.4 L920.02 398.49 L920.84 397.71 L921.65 398.49 L922.46 407.4 L922.46 407.4 L923.28 398.49 L924.09 397.71 L924.91 398.49 L925.72 407.4 L925.72 407.4 L926.53 398.49 L927.35 397.71 L928.16 398.49 L928.97 407.4 L928.97 407.4 L929.79 398.49 L930.6 397.71 L931.42 398.49 L932.23 407.4 L932.23 407.4 L933.04 398.49 L933.86 397.71 L934.67 398.49 L935.49 407.4 L935.49 407.4 L936.3 398.49 L937.11 397.71 L937.93 398.49 L938.74 407.4 L938.74 407.4 L939.55 398.49 L940.37 397.71 L941.18 398.49 L942 407.4 L942 407.4 L942.81 398.49 L943.62 397.71 L944.44 398.49 L945.25 407.4 L945.25 407.4 L946.06 398.49" fill="none" stroke="#5794f2" stroke-width="0.85" stroke-linejoin="round"/><circle cx="921" cy="397.4" r="2.400" fill="#5794f2"/></svg>
<div style="left:0;top:0;width:917.4px;height:639px;overflow:hidden;">
<div class="t" style="left:738.8px;top:387px;font-size:6.9px;color:rgba(204,204,220,0.86);-webkit-text-stroke:0.14px rgba(204,204,220,0.86);letter-spacing:0.51px;">14:00</div>
<div class="t" style="left:771.35px;top:387px;font-size:6.9px;color:rgba(204,204,220,0.86);-webkit-text-stroke:0.14px rgba(204,204,220,0.86);letter-spacing:0.51px;">14:10</div>
<div class="t" style="left:803.9px;top:387px;font-size:6.9px;color:rgba(204,204,220,0.86);-webkit-text-stroke:0.14px rgba(204,204,220,0.86);letter-spacing:0.51px;">14:20</div>
<div class="t" style="left:836.45px;top:387px;font-size:6.9px;color:rgba(204,204,220,0.86);-webkit-text-stroke:0.14px rgba(204,204,220,0.86);letter-spacing:0.51px;">14:30</div>
<div class="t" style="left:869px;top:387px;font-size:6.9px;color:rgba(204,204,220,0.86);-webkit-text-stroke:0.14px rgba(204,204,220,0.86);letter-spacing:0.51px;">14:40</div>
<div class="t" style="left:901.55px;top:387px;font-size:6.9px;color:rgba(204,204,220,0.86);-webkit-text-stroke:0.14px rgba(204,204,220,0.86);letter-spacing:0.51px;">14:50</div>
</div>
<div style="left:692.5px;top:403.85px;width:8.200px;height:2.200px;border-radius:1.100px;background:#5794f2;"></div>
<div class="t" style="left:704.8px;top:400px;font-size:6.7px;color:rgba(204,204,220,0.82);-webkit-text-stroke:0.1px rgba(204,204,220,0.82);letter-spacing:0.26px;">sum(rate)</div>
<div style="left:202.85px;top:422px;width:237px;height:121.4px;background:#181b1f;border:.6px solid rgba(204,204,220,0.12);border-radius:1.300px;"></div>
<div class="t" style="left:207.7px;top:426px;font-size:7.7px;color:#dcdce8;letter-spacing:0.36px;-webkit-text-stroke:.22px #dcdce8;">trident_operation_duration_milliseconds_sum</div>
<div style="left:405px;top:424.9px;width:29.600px;height:13.100px;border:.75px solid #4f7fd9;border-radius:1.300px;"></div>
<div class="t" style="left:409.85px;top:427px;font-size:6.6px;color:#6e9fff;font-weight:700;letter-spacing:0.09px;">Select</div>
<div class="t" style="left:210.39px;top:456px;font-size:6.9px;color:rgba(204,204,220,0.86);-webkit-text-stroke:0.14px rgba(204,204,220,0.86);letter-spacing:0.36px;">600 c/s</div>
<div class="t" style="left:210.39px;top:473px;font-size:6.9px;color:rgba(204,204,220,0.86);-webkit-text-stroke:0.14px rgba(204,204,220,0.86);letter-spacing:0.36px;">400 c/s</div>
<div class="t" style="left:210.39px;top:489px;font-size:6.9px;color:rgba(204,204,220,0.86);-webkit-text-stroke:0.14px rgba(204,204,220,0.86);letter-spacing:0.36px;">200 c/s</div>
<div class="t" style="left:218.79px;top:505px;font-size:6.9px;color:rgba(204,204,220,0.86);-webkit-text-stroke:0.14px rgba(204,204,220,0.86);letter-spacing:0.36px;">0 c/s</div>
<svg style="left:0;top:0;" width="931" height="639" viewBox="34 23 931 639"><path d="M271.3 484.4H463.8" stroke="rgba(204,204,220,0.17)" stroke-width=".6"/><path d="M271.3 500.73H463.8" stroke="rgba(204,204,220,0.17)" stroke-width=".6"/><path d="M271.3 517.06H463.8" stroke="rgba(204,204,220,0.17)" stroke-width=".6"/><path d="M271.3 533.39H463.8" stroke="rgba(204,204,220,0.17)" stroke-width=".6"/><path d="M302.5 472.9V535.39" stroke="rgba(204,204,220,0.17)" stroke-width=".6"/><path d="M334.65 472.9V535.39" stroke="rgba(204,204,220,0.17)" stroke-width=".6"/><path d="M366.8 472.9V535.39" stroke="rgba(204,204,220,0.17)" stroke-width=".6"/><path d="M398.95 472.9V535.39" stroke="rgba(204,204,220,0.17)" stroke-width=".6"/><path d="M431.1 472.9V535.39" stroke="rgba(204,204,220,0.17)" stroke-width=".6"/><path d="M463.25 472.9V535.39" stroke="rgba(204,204,220,0.17)" stroke-width=".6"/><path d="M439.3 472.9V533.39" stroke="rgba(204,204,220,.46)" stroke-width=".6" stroke-dasharray="1.600 1.700"/><path d="M271.3 516.1H463.8" stroke="rgba(204,204,220,.46)" stroke-width=".6" stroke-dasharray="1.600 1.700"/><path d="M271.3 533.39 L422.58 533.39 L423.06 529.72 L423.87 528.5 L424.35 479.6 L424.99 478.95 L426.12 484.49 L427.08 485.71 L427.5 533.39 L463.8 533.39 L463.8 533.39 L271.3 533.39Z" fill="#b174d3" fill-opacity="0.45" stroke="none"/><path d="M271.3 533.39 L422.58 533.39 L423.06 529.72 L423.87 528.5 L424.35 479.6 L424.99 478.95 L426.12 484.49 L427.08 485.71 L427.5 533.39 L463.8 533.39" fill="none" stroke="#b174d3" stroke-width="0.7" stroke-linejoin="round"/><circle cx="439.3" cy="533.39" r="2.400" fill="#b174d3"/></svg>
<div style="left:0;top:0;width:434.8px;height:639px;overflow:hidden;">
<div class="t" style="left:258.8px;top:514px;font-size:6.9px;color:rgba(204,204,220,0.86);-webkit-text-stroke:0.14px rgba(204,204,220,0.86);letter-spacing:0.51px;">14:00</div>
<div class="t" style="left:290.95px;top:514px;font-size:6.9px;color:rgba(204,204,220,0.86);-webkit-text-stroke:0.14px rgba(204,204,220,0.86);letter-spacing:0.51px;">14:10</div>
<div class="t" style="left:323.1px;top:514px;font-size:6.9px;color:rgba(204,204,220,0.86);-webkit-text-stroke:0.14px rgba(204,204,220,0.86);letter-spacing:0.51px;">14:20</div>
<div class="t" style="left:355.25px;top:514px;font-size:6.9px;color:rgba(204,204,220,0.86);-webkit-text-stroke:0.14px rgba(204,204,220,0.86);letter-spacing:0.51px;">14:30</div>
<div class="t" style="left:387.4px;top:514px;font-size:6.9px;color:rgba(204,204,220,0.86);-webkit-text-stroke:0.14px rgba(204,204,220,0.86);letter-spacing:0.51px;">14:40</div>
<div class="t" style="left:419.55px;top:514px;font-size:6.9px;color:rgba(204,204,220,0.86);-webkit-text-stroke:0.14px rgba(204,204,220,0.86);letter-spacing:0.51px;">14:50</div>
</div>
<div style="left:209.9px;top:530px;width:8.200px;height:2.200px;border-radius:1.100px;background:#b174d3;"></div>
<div class="t" style="left:222.2px;top:526px;font-size:6.7px;color:rgba(204,204,220,0.82);-webkit-text-stroke:0.1px rgba(204,204,220,0.82);letter-spacing:0.26px;">sum(rate)</div>
<div style="left:444.15px;top:422px;width:237px;height:121.4px;background:#181b1f;border:.6px solid rgba(204,204,220,0.12);border-radius:1.300px;"></div>
<div class="t" style="left:449px;top:426px;font-size:7.7px;color:#dcdce8;letter-spacing:0.33px;-webkit-text-stroke:.22px #dcdce8;">trident_rest_ops_seconds_total</div>
<div style="left:646.3px;top:424.9px;width:29.600px;height:13.100px;border:.75px solid #4f7fd9;border-radius:1.300px;"></div>
<div class="t" style="left:651.15px;top:427px;font-size:6.6px;color:#6e9fff;font-weight:700;letter-spacing:0.09px;">Select</div>
<svg style="left:0;top:0;" width="931" height="639" viewBox="34 23 931 639"><path d="M522.5 467.7V535.9" stroke="rgba(204,204,220,0.17)" stroke-width=".6"/><path d="M558.65 467.7V535.9" stroke="rgba(204,204,220,0.17)" stroke-width=".6"/><path d="M594.8 467.7V535.9" stroke="rgba(204,204,220,0.17)" stroke-width=".6"/><path d="M630.95 467.7V535.9" stroke="rgba(204,204,220,0.17)" stroke-width=".6"/><path d="M667.1 467.7V535.9" stroke="rgba(204,204,220,0.17)" stroke-width=".6"/><path d="M703.25 467.7V535.9" stroke="rgba(204,204,220,0.17)" stroke-width=".6"/><path d="M676.32 467.7V533" stroke="rgba(204,204,220,.46)" stroke-width=".6" stroke-dasharray="1.600 1.700"/><path d="M487 514.4H705" stroke="rgba(204,204,220,.46)" stroke-width=".6" stroke-dasharray="1.600 1.700"/></svg>
<div style="left:0;top:0;width:676.1px;height:639px;overflow:hidden;">
<div class="t" style="left:478.8px;top:514px;font-size:6.9px;color:rgba(204,204,220,0.86);-webkit-text-stroke:0.14px rgba(204,204,220,0.86);letter-spacing:0.51px;">14:00</div>
<div class="t" style="left:514.95px;top:514px;font-size:6.9px;color:rgba(204,204,220,0.86);-webkit-text-stroke:0.14px rgba(204,204,220,0.86);letter-spacing:0.51px;">14:10</div>
<div class="t" style="left:551.1px;top:514px;font-size:6.9px;color:rgba(204,204,220,0.86);-webkit-text-stroke:0.14px rgba(204,204,220,0.86);letter-spacing:0.51px;">14:20</div>
<div class="t" style="left:587.25px;top:514px;font-size:6.9px;color:rgba(204,204,220,0.86);-webkit-text-stroke:0.14px rgba(204,204,220,0.86);letter-spacing:0.51px;">14:30</div>
<div class="t" style="left:623.4px;top:514px;font-size:6.9px;color:rgba(204,204,220,0.86);-webkit-text-stroke:0.14px rgba(204,204,220,0.86);letter-spacing:0.51px;">14:40</div>
<div class="t" style="left:659.55px;top:514px;font-size:6.9px;color:rgba(204,204,220,0.86);-webkit-text-stroke:0.14px rgba(204,204,220,0.86);letter-spacing:0.51px;">14:50</div>
</div>
<div style="left:451.2px;top:530px;width:8.200px;height:2.200px;border-radius:1.100px;background:#8f6ed6;"></div>
<div class="t" style="left:463.5px;top:526px;font-size:6.7px;color:rgba(204,204,220,0.82);-webkit-text-stroke:0.1px rgba(204,204,220,0.82);letter-spacing:0.26px;">sum(rate)</div>
<div style="left:685.45px;top:422px;width:237px;height:121.4px;background:#181b1f;border:.6px solid rgba(204,204,220,0.12);border-radius:1.300px;"></div>
<div class="t" style="left:690.3px;top:426px;font-size:7.7px;color:#dcdce8;letter-spacing:0.33px;-webkit-text-stroke:.22px #dcdce8;">trident_rest_ops_seconds_total_count</div>
<div style="left:887.6px;top:424.9px;width:29.600px;height:13.100px;border:.75px solid #4f7fd9;border-radius:1.300px;"></div>
<div class="t" style="left:892.45px;top:427px;font-size:6.6px;color:#6e9fff;font-weight:700;letter-spacing:0.09px;">Select</div>
<div class="t" style="left:691.32px;top:455px;font-size:6.9px;color:rgba(204,204,220,0.86);-webkit-text-stroke:0.14px rgba(204,204,220,0.86);letter-spacing:0.36px;">0.08 c/s</div>
<div class="t" style="left:691.32px;top:468px;font-size:6.9px;color:rgba(204,204,220,0.86);-webkit-text-stroke:0.14px rgba(204,204,220,0.86);letter-spacing:0.36px;">0.06 c/s</div>
<div class="t" style="left:691.32px;top:480px;font-size:6.9px;color:rgba(204,204,220,0.86);-webkit-text-stroke:0.14px rgba(204,204,220,0.86);letter-spacing:0.36px;">0.04 c/s</div>
<div class="t" style="left:691.32px;top:493px;font-size:6.9px;color:rgba(204,204,220,0.86);-webkit-text-stroke:0.14px rgba(204,204,220,0.86);letter-spacing:0.36px;">0.02 c/s</div>
<div class="t" style="left:701.99px;top:505px;font-size:6.9px;color:rgba(204,204,220,0.86);-webkit-text-stroke:0.14px rgba(204,204,220,0.86);letter-spacing:0.36px;">0 c/s</div>
<svg style="left:0;top:0;" width="931" height="639" viewBox="34 23 931 639"><path d="M755 483.3H946.3" stroke="rgba(204,204,220,0.17)" stroke-width=".6"/><path d="M755 495.8H946.3" stroke="rgba(204,204,220,0.17)" stroke-width=".6"/><path d="M755 508.3H946.3" stroke="rgba(204,204,220,0.17)" stroke-width=".6"/><path d="M755 520.8H946.3" stroke="rgba(204,204,220,0.17)" stroke-width=".6"/><path d="M755 533.3H946.3" stroke="rgba(204,204,220,0.17)" stroke-width=".6"/><path d="M786.25 472.9V535.3" stroke="rgba(204,204,220,0.17)" stroke-width=".6"/><path d="M818.05 472.9V535.3" stroke="rgba(204,204,220,0.17)" stroke-width=".6"/><path d="M849.85 472.9V535.3" stroke="rgba(204,204,220,0.17)" stroke-width=".6"/><path d="M881.65 472.9V535.3" stroke="rgba(204,204,220,0.17)" stroke-width=".6"/><path d="M913.45 472.9V535.3" stroke="rgba(204,204,220,0.17)" stroke-width=".6"/><path d="M945.25 472.9V535.3" stroke="rgba(204,204,220,0.17)" stroke-width=".6"/><path d="M921.56 472.9V533.3" stroke="rgba(204,204,220,.46)" stroke-width=".6" stroke-dasharray="1.600 1.700"/><path d="M755 516.1H946.3" stroke="rgba(204,204,220,.46)" stroke-width=".6" stroke-dasharray="1.600 1.700"/><path d="M755.25 533.3 L757.38 533.3 L758.27 519.42 L760.24 519.42 L761.13 533.3 L763.89 533.3 L765.01 519.42 L766.76 518.61 L767.93 492.05 L768.51 492.05 L769.94 533.3 L770.67 519.42 L772.16 519.42 L773.21 533.3 L776.61 533.3 L777.5 519.42 L779.48 519.42 L780.37 533.3 L782.24 533.3 L784.18 477.99 L784.63 477.99 L786.57 533.3 L789.18 533.3 L790.07 519.42 L792.04 519.42 L792.93 533.3 L795.69 533.3 L796.81 519.42 L798.56 518.61 L799.73 492.05 L800.31 492.05 L801.74 533.3 L802.47 519.42 L803.96 519.42 L805.01 533.3 L808.41 533.3 L809.3 519.42 L811.28 519.42 L812.17 533.3 L814.04 533.3 L815.98 477.99 L816.43 477.99 L818.37 533.3 L820.98 533.3 L821.87 519.42 L823.84 519.42 L824.73 533.3 L827.49 533.3 L828.61 519.42 L830.36 518.61 L831.53 492.05 L832.11 492.05 L833.54 533.3 L834.27 519.42 L835.76 519.42 L836.81 533.3 L840.21 533.3 L841.11 519.42 L843.08 519.42 L843.97 533.3 L845.84 533.3 L847.78 477.99 L848.23 477.99 L850.17 533.3 L852.78 533.3 L853.67 519.42 L855.64 519.42 L856.53 533.3 L859.29 533.3 L860.41 519.42 L862.16 518.61 L863.33 492.05 L863.91 492.05 L865.34 533.3 L866.07 519.42 L867.56 519.42 L868.61 533.3 L872.01 533.3 L872.9 519.42 L874.88 519.42 L875.77 533.3 L877.64 533.3 L879.58 477.99 L880.03 477.99 L881.97 533.3 L884.58 533.3 L885.47 519.42 L887.44 519.42 L888.33 533.3 L891.09 533.3 L892.21 519.42 L893.96 518.61 L895.13 492.05 L895.71 492.05 L897.14 533.3 L897.87 519.42 L899.36 519.42 L900.41 533.3 L903.81 533.3 L904.71 519.42 L906.68 519.42 L907.57 533.3 L909.44 533.3 L911.38 477.99 L911.83 477.99 L913.77 533.3 L916.38 533.3 L917.27 519.42 L919.24 519.42 L920.13 533.3 L922.89 533.3 L924.01 519.42 L925.76 518.61 L926.93 492.05 L927.51 492.05 L928.94 533.3 L929.67 519.42 L931.16 519.42 L932.21 533.3 L935.61 533.3 L936.5 519.42 L938.48 519.42 L939.37 533.3 L941.24 533.3 L943.18 477.99 L943.63 477.99 L945.57 533.3 L945.57 533.3 L755.25 533.3Z" fill="#73bf69" fill-opacity="0.13" stroke="none"/><path d="M755.25 533.3 L757.38 533.3 L758.27 519.42 L760.24 519.42 L761.13 533.3 L763.89 533.3 L765.01 519.42 L766.76 518.61 L767.93 492.05 L768.51 492.05 L769.94 533.3 L770.67 519.42 L772.16 519.42 L773.21 533.3 L776.61 533.3 L777.5 519.42 L779.48 519.42 L780.37 533.3 L782.24 533.3 L784.18 477.99 L784.63 477.99 L786.57 533.3 L789.18 533.3 L790.07 519.42 L792.04 519.42 L792.93 533.3 L795.69 533.3 L796.81 519.42 L798.56 518.61 L799.73 492.05 L800.31 492.05 L801.74 533.3 L802.47 519.42 L803.96 519.42 L805.01 533.3 L808.41 533.3 L809.3 519.42 L811.28 519.42 L812.17 533.3 L814.04 533.3 L815.98 477.99 L816.43 477.99 L818.37 533.3 L820.98 533.3 L821.87 519.42 L823.84 519.42 L824.73 533.3 L827.49 533.3 L828.61 519.42 L830.36 518.61 L831.53 492.05 L832.11 492.05 L833.54 533.3 L834.27 519.42 L835.76 519.42 L836.81 533.3 L840.21 533.3 L841.11 519.42 L843.08 519.42 L843.97 533.3 L845.84 533.3 L847.78 477.99 L848.23 477.99 L850.17 533.3 L852.78 533.3 L853.67 519.42 L855.64 519.42 L856.53 533.3 L859.29 533.3 L860.41 519.42 L862.16 518.61 L863.33 492.05 L863.91 492.05 L865.34 533.3 L866.07 519.42 L867.56 519.42 L868.61 533.3 L872.01 533.3 L872.9 519.42 L874.88 519.42 L875.77 533.3 L877.64 533.3 L879.58 477.99 L880.03 477.99 L881.97 533.3 L884.58 533.3 L885.47 519.42 L887.44 519.42 L888.33 533.3 L891.09 533.3 L892.21 519.42 L893.96 518.61 L895.13 492.05 L895.71 492.05 L897.14 533.3 L897.87 519.42 L899.36 519.42 L900.41 533.3 L903.81 533.3 L904.71 519.42 L906.68 519.42 L907.57 533.3 L909.44 533.3 L911.38 477.99 L911.83 477.99 L913.77 533.3 L916.38 533.3 L917.27 519.42 L919.24 519.42 L920.13 533.3 L922.89 533.3 L924.01 519.42 L925.76 518.61 L926.93 492.05 L927.51 492.05 L928.94 533.3 L929.67 519.42 L931.16 519.42 L932.21 533.3 L935.61 533.3 L936.5 519.42 L938.48 519.42 L939.37 533.3 L941.24 533.3 L943.18 477.99 L943.63 477.99 L945.57 533.3" fill="none" stroke="#73bf69" stroke-width="0.8" stroke-linejoin="round"/><circle cx="921.56" cy="533.3" r="2.400" fill="#73bf69"/></svg>
<div style="left:0;top:0;width:917.4px;height:639px;overflow:hidden;">
<div class="t" style="left:742.55px;top:514px;font-size:6.9px;color:rgba(204,204,220,0.86);-webkit-text-stroke:0.14px rgba(204,204,220,0.86);letter-spacing:0.51px;">14:00</div>
<div class="t" style="left:774.35px;top:514px;font-size:6.9px;color:rgba(204,204,220,0.86);-webkit-text-stroke:0.14px rgba(204,204,220,0.86);letter-spacing:0.51px;">14:10</div>
<div class="t" style="left:806.15px;top:514px;font-size:6.9px;color:rgba(204,204,220,0.86);-webkit-text-stroke:0.14px rgba(204,204,220,0.86);letter-spacing:0.51px;">14:20</div>
<div class="t" style="left:837.95px;top:514px;font-size:6.9px;color:rgba(204,204,220,0.86);-webkit-text-stroke:0.14px rgba(204,204,220,0.86);letter-spacing:0.51px;">14:30</div>
<div class="t" style="left:869.75px;top:514px;font-size:6.9px;color:rgba(204,204,220,0.86);-webkit-text-stroke:0.14px rgba(204,204,220,0.86);letter-spacing:0.51px;">14:40</div>
<div class="t" style="left:901.55px;top:514px;font-size:6.9px;color:rgba(204,204,220,0.86);-webkit-text-stroke:0.14px rgba(204,204,220,0.86);letter-spacing:0.51px;">14:50</div>
</div>
<div style="left:692.5px;top:530px;width:8.200px;height:2.200px;border-radius:1.100px;background:#73bf69;"></div>
<div class="t" style="left:704.8px;top:526px;font-size:6.7px;color:rgba(204,204,220,0.82);-webkit-text-stroke:0.1px rgba(204,204,220,0.82);letter-spacing:0.26px;">sum(rate)</div>
<div style="left:202.85px;top:548.1px;width:237px;height:121.4px;background:#181b1f;border:.6px solid rgba(204,204,220,0.12);border-radius:1.300px;"></div>
<div class="t" style="left:207.7px;top:552px;font-size:7.7px;color:#dcdce8;letter-spacing:0.31px;-webkit-text-stroke:.22px #dcdce8;">trident_rest_ops_seconds_total_sum</div>
<div style="left:405px;top:551px;width:29.600px;height:13.100px;border:.75px solid #4f7fd9;border-radius:1.300px;"></div>
<div class="t" style="left:409.85px;top:553px;font-size:6.6px;color:#6e9fff;font-weight:700;letter-spacing:0.09px;">Select</div>
<div class="t" style="left:208.79px;top:570px;font-size:6.9px;color:rgba(204,204,220,0.86);-webkit-text-stroke:0.14px rgba(204,204,220,0.86);letter-spacing:0.36px;">100 c/s</div>
<div class="t" style="left:212.99px;top:582px;font-size:6.9px;color:rgba(204,204,220,0.86);-webkit-text-stroke:0.14px rgba(204,204,220,0.86);letter-spacing:0.36px;">80 c/s</div>
<div class="t" style="left:212.99px;top:595px;font-size:6.9px;color:rgba(204,204,220,0.86);-webkit-text-stroke:0.14px rgba(204,204,220,0.86);letter-spacing:0.36px;">60 c/s</div>
<div class="t" style="left:212.99px;top:607px;font-size:6.9px;color:rgba(204,204,220,0.86);-webkit-text-stroke:0.14px rgba(204,204,220,0.86);letter-spacing:0.36px;">40 c/s</div>
<div class="t" style="left:212.99px;top:619px;font-size:6.9px;color:rgba(204,204,220,0.86);-webkit-text-stroke:0.14px rgba(204,204,220,0.86);letter-spacing:0.36px;">20 c/s</div>
<div class="t" style="left:217.19px;top:631px;font-size:6.9px;color:rgba(204,204,220,0.86);-webkit-text-stroke:0.14px rgba(204,204,220,0.86);letter-spacing:0.36px;">0 c/s</div>
<svg style="left:0;top:0;" width="931" height="639" viewBox="34 23 931 639"><path d="M270 598.45H464.3" stroke="rgba(204,204,220,0.17)" stroke-width=".6"/><path d="M270 610.52H464.3" stroke="rgba(204,204,220,0.17)" stroke-width=".6"/><path d="M270 622.59H464.3" stroke="rgba(204,204,220,0.17)" stroke-width=".6"/><path d="M270 634.66H464.3" stroke="rgba(204,204,220,0.17)" stroke-width=".6"/><path d="M270 646.73H464.3" stroke="rgba(204,204,220,0.17)" stroke-width=".6"/><path d="M270 658.8H464.3" stroke="rgba(204,204,220,0.17)" stroke-width=".6"/><path d="M301.3 598.45V660.8" stroke="rgba(204,204,220,0.17)" stroke-width=".6"/><path d="M333.7 598.45V660.8" stroke="rgba(204,204,220,0.17)" stroke-width=".6"/><path d="M366.1 598.45V660.8" stroke="rgba(204,204,220,0.17)" stroke-width=".6"/><path d="M398.5 598.45V660.8" stroke="rgba(204,204,220,0.17)" stroke-width=".6"/><path d="M430.9 598.45V660.8" stroke="rgba(204,204,220,0.17)" stroke-width=".6"/><path d="M463.3 598.45V660.8" stroke="rgba(204,204,220,0.17)" stroke-width=".6"/><path d="M439.16 598.45V658.8" stroke="rgba(204,204,220,.46)" stroke-width=".6" stroke-dasharray="1.600 1.700"/><path d="M270 642.2H464.3" stroke="rgba(204,204,220,.46)" stroke-width=".6" stroke-dasharray="1.600 1.700"/><path d="M270 658.8 L464.27 658.8" fill="none" stroke="#73bf69" stroke-width="0.9" stroke-linejoin="round"/><circle cx="439.16" cy="658.8" r="2.400" fill="#73bf69"/></svg>
<div style="left:0;top:0;width:434.8px;height:639px;overflow:hidden;">
<div class="t" style="left:257.6px;top:640px;font-size:6.9px;color:rgba(204,204,220,0.86);-webkit-text-stroke:0.14px rgba(204,204,220,0.86);letter-spacing:0.51px;">14:00</div>
<div class="t" style="left:290px;top:640px;font-size:6.9px;color:rgba(204,204,220,0.86);-webkit-text-stroke:0.14px rgba(204,204,220,0.86);letter-spacing:0.51px;">14:10</div>
<div class="t" style="left:322.4px;top:640px;font-size:6.9px;color:rgba(204,204,220,0.86);-webkit-text-stroke:0.14px rgba(204,204,220,0.86);letter-spacing:0.51px;">14:20</div>
<div class="t" style="left:354.8px;top:640px;font-size:6.9px;color:rgba(204,204,220,0.86);-webkit-text-stroke:0.14px rgba(204,204,220,0.86);letter-spacing:0.51px;">14:30</div>
<div class="t" style="left:387.2px;top:640px;font-size:6.9px;color:rgba(204,204,220,0.86);-webkit-text-stroke:0.14px rgba(204,204,220,0.86);letter-spacing:0.51px;">14:40</div>
<div class="t" style="left:419.6px;top:640px;font-size:6.9px;color:rgba(204,204,220,0.86);-webkit-text-stroke:0.14px rgba(204,204,220,0.86);letter-spacing:0.51px;">14:50</div>
</div>
<div style="left:209.9px;top:656.1px;width:8.200px;height:2.200px;border-radius:1.100px;background:#73bf69;"></div>
<div class="t" style="left:222.2px;top:652px;font-size:6.7px;color:rgba(204,204,220,0.82);-webkit-text-stroke:0.1px rgba(204,204,220,0.82);letter-spacing:0.26px;">sum(rate)</div>
<div style="left:444.15px;top:548.1px;width:237px;height:121.4px;background:#181b1f;border:.6px solid rgba(204,204,220,0.12);border-radius:1.300px;"></div>
<div class="t" style="left:449px;top:552px;font-size:7.7px;color:#dcdce8;letter-spacing:0.33px;-webkit-text-stroke:.22px #dcdce8;">trident_rest_ops_total</div>
<div style="left:646.3px;top:551px;width:29.600px;height:13.100px;border:.75px solid #4f7fd9;border-radius:1.300px;"></div>
<div class="t" style="left:651.15px;top:553px;font-size:6.6px;color:#6e9fff;font-weight:700;letter-spacing:0.09px;">Select</div>
<div class="t" style="left:450.62px;top:581px;font-size:6.9px;color:rgba(204,204,220,0.86);-webkit-text-stroke:0.14px rgba(204,204,220,0.86);letter-spacing:0.36px;">0.08 c/s</div>
<div class="t" style="left:450.62px;top:594px;font-size:6.9px;color:rgba(204,204,220,0.86);-webkit-text-stroke:0.14px rgba(204,204,220,0.86);letter-spacing:0.36px;">0.06 c/s</div>
<div class="t" style="left:450.62px;top:606px;font-size:6.9px;color:rgba(204,204,220,0.86);-webkit-text-stroke:0.14px rgba(204,204,220,0.86);letter-spacing:0.36px;">0.04 c/s</div>
<div class="t" style="left:450.62px;top:619px;font-size:6.9px;color:rgba(204,204,220,0.86);-webkit-text-stroke:0.14px rgba(204,204,220,0.86);letter-spacing:0.36px;">0.02 c/s</div>
<div class="t" style="left:461.29px;top:631px;font-size:6.9px;color:rgba(204,204,220,0.86);-webkit-text-stroke:0.14px rgba(204,204,220,0.86);letter-spacing:0.36px;">0 c/s</div>
<svg style="left:0;top:0;" width="931" height="639" viewBox="34 23 931 639"><path d="M513.8 609.3H705" stroke="rgba(204,204,220,0.17)" stroke-width=".6"/><path d="M513.8 621.8H705" stroke="rgba(204,204,220,0.17)" stroke-width=".6"/><path d="M513.8 634.3H705" stroke="rgba(204,204,220,0.17)" stroke-width=".6"/><path d="M513.8 646.8H705" stroke="rgba(204,204,220,0.17)" stroke-width=".6"/><path d="M513.8 659.3H705" stroke="rgba(204,204,220,0.17)" stroke-width=".6"/><path d="M545.5 599V661.3" stroke="rgba(204,204,220,0.17)" stroke-width=".6"/><path d="M577.25 599V661.3" stroke="rgba(204,204,220,0.17)" stroke-width=".6"/><path d="M609 599V661.3" stroke="rgba(204,204,220,0.17)" stroke-width=".6"/><path d="M640.75 599V661.3" stroke="rgba(204,204,220,0.17)" stroke-width=".6"/><path d="M672.5 599V661.3" stroke="rgba(204,204,220,0.17)" stroke-width=".6"/><path d="M704.25 599V661.3" stroke="rgba(204,204,220,0.17)" stroke-width=".6"/><path d="M680.6 599V659.3" stroke="rgba(204,204,220,.46)" stroke-width=".6" stroke-dasharray="1.600 1.700"/><path d="M513.8 642.2H705" stroke="rgba(204,204,220,.46)" stroke-width=".6" stroke-dasharray="1.600 1.700"/><path d="M514.54 659.3 L516.67 659.3 L517.56 645.43 L519.53 645.43 L520.42 659.3 L523.18 659.3 L524.29 645.43 L526.04 644.61 L527.21 618.05 L527.78 618.05 L529.21 659.3 L529.94 645.43 L531.43 645.43 L532.48 659.3 L535.88 659.3 L536.77 645.43 L538.74 645.43 L539.63 659.3 L541.5 659.3 L543.44 603.99 L543.88 603.99 L545.82 659.3 L548.42 659.3 L549.31 645.43 L551.28 645.43 L552.17 659.3 L554.93 659.3 L556.04 645.43 L557.79 644.61 L558.96 618.05 L559.53 618.05 L560.96 659.3 L561.69 645.43 L563.18 645.43 L564.23 659.3 L567.63 659.3 L568.52 645.43 L570.49 645.43 L571.38 659.3 L573.25 659.3 L575.19 603.99 L575.63 603.99 L577.57 659.3 L580.17 659.3 L581.06 645.43 L583.03 645.43 L583.92 659.3 L586.68 659.3 L587.79 645.43 L589.54 644.61 L590.71 618.05 L591.28 618.05 L592.71 659.3 L593.44 645.43 L594.93 645.43 L595.98 659.3 L599.38 659.3 L600.27 645.43 L602.24 645.43 L603.13 659.3 L605 659.3 L606.94 603.99 L607.38 603.99 L609.32 659.3 L611.92 659.3 L612.81 645.43 L614.78 645.43 L615.67 659.3 L618.43 659.3 L619.54 645.43 L621.29 644.61 L622.46 618.05 L623.03 618.05 L624.46 659.3 L625.19 645.43 L626.68 645.43 L627.73 659.3 L631.13 659.3 L632.02 645.43 L633.99 645.43 L634.88 659.3 L636.75 659.3 L638.69 603.99 L639.13 603.99 L641.07 659.3 L643.67 659.3 L644.56 645.43 L646.53 645.43 L647.42 659.3 L650.18 659.3 L651.29 645.43 L653.04 644.61 L654.21 618.05 L654.78 618.05 L656.21 659.3 L656.94 645.43 L658.43 645.43 L659.48 659.3 L662.88 659.3 L663.77 645.43 L665.74 645.43 L666.63 659.3 L668.5 659.3 L670.44 603.99 L670.88 603.99 L672.82 659.3 L675.42 659.3 L676.31 645.43 L678.28 645.43 L679.17 659.3 L681.93 659.3 L683.04 645.43 L684.79 644.61 L685.96 618.05 L686.53 618.05 L687.96 659.3 L688.69 645.43 L690.18 645.43 L691.23 659.3 L694.63 659.3 L695.52 645.43 L697.49 645.43 L698.38 659.3 L700.25 659.3 L702.19 603.99 L702.63 603.99 L704.57 659.3 L704.57 659.3 L514.54 659.3Z" fill="#6f9fe6" fill-opacity="0.2" stroke="none"/><path d="M514.54 659.3 L516.67 659.3 L517.56 645.43 L519.53 645.43 L520.42 659.3 L523.18 659.3 L524.29 645.43 L526.04 644.61 L527.21 618.05 L527.78 618.05 L529.21 659.3 L529.94 645.43 L531.43 645.43 L532.48 659.3 L535.88 659.3 L536.77 645.43 L538.74 645.43 L539.63 659.3 L541.5 659.3 L543.44 603.99 L543.88 603.99 L545.82 659.3 L548.42 659.3 L549.31 645.43 L551.28 645.43 L552.17 659.3 L554.93 659.3 L556.04 645.43 L557.79 644.61 L558.96 618.05 L559.53 618.05 L560.96 659.3 L561.69 645.43 L563.18 645.43 L564.23 659.3 L567.63 659.3 L568.52 645.43 L570.49 645.43 L571.38 659.3 L573.25 659.3 L575.19 603.99 L575.63 603.99 L577.57 659.3 L580.17 659.3 L581.06 645.43 L583.03 645.43 L583.92 659.3 L586.68 659.3 L587.79 645.43 L589.54 644.61 L590.71 618.05 L591.28 618.05 L592.71 659.3 L593.44 645.43 L594.93 645.43 L595.98 659.3 L599.38 659.3 L600.27 645.43 L602.24 645.43 L603.13 659.3 L605 659.3 L606.94 603.99 L607.38 603.99 L609.32 659.3 L611.92 659.3 L612.81 645.43 L614.78 645.43 L615.67 659.3 L618.43 659.3 L619.54 645.43 L621.29 644.61 L622.46 618.05 L623.03 618.05 L624.46 659.3 L625.19 645.43 L626.68 645.43 L627.73 659.3 L631.13 659.3 L632.02 645.43 L633.99 645.43 L634.88 659.3 L636.75 659.3 L638.69 603.99 L639.13 603.99 L641.07 659.3 L643.67 659.3 L644.56 645.43 L646.53 645.43 L647.42 659.3 L650.18 659.3 L651.29 645.43 L653.04 644.61 L654.21 618.05 L654.78 618.05 L656.21 659.3 L656.94 645.43 L658.43 645.43 L659.48 659.3 L662.88 659.3 L663.77 645.43 L665.74 645.43 L666.63 659.3 L668.5 659.3 L670.44 603.99 L670.88 603.99 L672.82 659.3 L675.42 659.3 L676.31 645.43 L678.28 645.43 L679.17 659.3 L681.93 659.3 L683.04 645.43 L684.79 644.61 L685.96 618.05 L686.53 618.05 L687.96 659.3 L688.69 645.43 L690.18 645.43 L691.23 659.3 L694.63 659.3 L695.52 645.43 L697.49 645.43 L698.38 659.3 L700.25 659.3 L702.19 603.99 L702.63 603.99 L704.57 659.3" fill="none" stroke="#6f9fe6" stroke-width="0.7" stroke-linejoin="round"/><circle cx="680.6" cy="659.3" r="2.400" fill="#6f9fe6"/></svg>
<div style="left:0;top:0;width:676.1px;height:639px;overflow:hidden;">
<div class="t" style="left:501.8px;top:640px;font-size:6.9px;color:rgba(204,204,220,0.86);-webkit-text-stroke:0.14px rgba(204,204,220,0.86);letter-spacing:0.51px;">14:00</div>
<div class="t" style="left:533.55px;top:640px;font-size:6.9px;color:rgba(204,204,220,0.86);-webkit-text-stroke:0.14px rgba(204,204,220,0.86);letter-spacing:0.51px;">14:10</div>
<div class="t" style="left:565.3px;top:640px;font-size:6.9px;color:rgba(204,204,220,0.86);-webkit-text-stroke:0.14px rgba(204,204,220,0.86);letter-spacing:0.51px;">14:20</div>
<div class="t" style="left:597.05px;top:640px;font-size:6.9px;color:rgba(204,204,220,0.86);-webkit-text-stroke:0.14px rgba(204,204,220,0.86);letter-spacing:0.51px;">14:30</div>
<div class="t" style="left:628.8px;top:640px;font-size:6.9px;color:rgba(204,204,220,0.86);-webkit-text-stroke:0.14px rgba(204,204,220,0.86);letter-spacing:0.51px;">14:40</div>
<div class="t" style="left:660.55px;top:640px;font-size:6.9px;color:rgba(204,204,220,0.86);-webkit-text-stroke:0.14px rgba(204,204,220,0.86);letter-spacing:0.51px;">14:50</div>
</div>
<div style="left:451.2px;top:656.1px;width:8.200px;height:2.200px;border-radius:1.100px;background:#6f9fe6;"></div>
<div class="t" style="left:463.5px;top:652px;font-size:6.7px;color:rgba(204,204,220,0.82);-webkit-text-stroke:0.1px rgba(204,204,220,0.82);letter-spacing:0.26px;">sum(rate)</div>
<div style="left:685.45px;top:548.1px;width:237px;height:121.4px;background:#181b1f;border:.6px solid rgba(204,204,220,0.12);border-radius:1.300px;"></div>
<div class="t" style="left:690.3px;top:552px;font-size:7.7px;color:#dcdce8;letter-spacing:0.36px;-webkit-text-stroke:.22px #dcdce8;">trident_snapshot_allocated_bytes</div>
<div style="left:887.6px;top:551px;width:29.600px;height:13.100px;border:.75px solid #4f7fd9;border-radius:1.300px;"></div>
<div class="t" style="left:892.45px;top:553px;font-size:6.6px;color:#6e9fff;font-weight:700;letter-spacing:0.09px;">Select</div>
<div class="t" style="left:692.03px;top:573px;font-size:6.9px;color:rgba(204,204,220,0.86);-webkit-text-stroke:0.14px rgba(204,204,220,0.86);letter-spacing:0.36px;">96 B</div>
<div class="t" style="left:692.03px;top:583px;font-size:6.9px;color:rgba(204,204,220,0.86);-webkit-text-stroke:0.14px rgba(204,204,220,0.86);letter-spacing:0.36px;">80 B</div>
<div class="t" style="left:692.03px;top:592px;font-size:6.9px;color:rgba(204,204,220,0.86);-webkit-text-stroke:0.14px rgba(204,204,220,0.86);letter-spacing:0.36px;">64 B</div>
<div class="t" style="left:692.03px;top:602px;font-size:6.9px;color:rgba(204,204,220,0.86);-webkit-text-stroke:0.14px rgba(204,204,220,0.86);letter-spacing:0.36px;">48 B</div>
<div class="t" style="left:692.03px;top:612px;font-size:6.9px;color:rgba(204,204,220,0.86);-webkit-text-stroke:0.14px rgba(204,204,220,0.86);letter-spacing:0.36px;">32 B</div>
<div class="t" style="left:692.03px;top:621px;font-size:6.9px;color:rgba(204,204,220,0.86);-webkit-text-stroke:0.14px rgba(204,204,220,0.86);letter-spacing:0.36px;">16 B</div>
<div class="t" style="left:696.22px;top:631px;font-size:6.9px;color:rgba(204,204,220,0.86);-webkit-text-stroke:0.14px rgba(204,204,220,0.86);letter-spacing:0.36px;">0 B</div>
<svg style="left:0;top:0;" width="931" height="639" viewBox="34 23 931 639"><path d="M744.3 601H945.9" stroke="rgba(204,204,220,0.17)" stroke-width=".6"/><path d="M744.3 610.65H945.9" stroke="rgba(204,204,220,0.17)" stroke-width=".6"/><path d="M744.3 620.3H945.9" stroke="rgba(204,204,220,0.17)" stroke-width=".6"/><path d="M744.3 629.95H945.9" stroke="rgba(204,204,220,0.17)" stroke-width=".6"/><path d="M744.3 639.6H945.9" stroke="rgba(204,204,220,0.17)" stroke-width=".6"/><path d="M744.3 649.25H945.9" stroke="rgba(204,204,220,0.17)" stroke-width=".6"/><path d="M744.3 658.9H945.9" stroke="rgba(204,204,220,0.17)" stroke-width=".6"/><path d="M776.5 598.9V660.9" stroke="rgba(204,204,220,0.17)" stroke-width=".6"/><path d="M810.2 598.9V660.9" stroke="rgba(204,204,220,0.17)" stroke-width=".6"/><path d="M843.9 598.9V660.9" stroke="rgba(204,204,220,0.17)" stroke-width=".6"/><path d="M877.6 598.9V660.9" stroke="rgba(204,204,220,0.17)" stroke-width=".6"/><path d="M911.3 598.9V660.9" stroke="rgba(204,204,220,0.17)" stroke-width=".6"/><path d="M945 598.9V660.9" stroke="rgba(204,204,220,0.17)" stroke-width=".6"/><path d="M919.89 598.9V658.9" stroke="rgba(204,204,220,.46)" stroke-width=".6" stroke-dasharray="1.600 1.700"/><path d="M744.3 642.2H945.9" stroke="rgba(204,204,220,.46)" stroke-width=".6" stroke-dasharray="1.600 1.700"/></svg>
<div style="left:0;top:0;width:917.4px;height:639px;overflow:hidden;">
<div class="t" style="left:732.8px;top:640px;font-size:6.9px;color:rgba(204,204,220,0.86);-webkit-text-stroke:0.14px rgba(204,204,220,0.86);letter-spacing:0.51px;">14:00</div>
<div class="t" style="left:766.5px;top:640px;font-size:6.9px;color:rgba(204,204,220,0.86);-webkit-text-stroke:0.14px rgba(204,204,220,0.86);letter-spacing:0.51px;">14:10</div>
<div class="t" style="left:800.2px;top:640px;font-size:6.9px;color:rgba(204,204,220,0.86);-webkit-text-stroke:0.14px rgba(204,204,220,0.86);letter-spacing:0.51px;">14:20</div>
<div class="t" style="left:833.9px;top:640px;font-size:6.9px;color:rgba(204,204,220,0.86);-webkit-text-stroke:0.14px rgba(204,204,220,0.86);letter-spacing:0.51px;">14:30</div>
<div class="t" style="left:867.6px;top:640px;font-size:6.9px;color:rgba(204,204,220,0.86);-webkit-text-stroke:0.14px rgba(204,204,220,0.86);letter-spacing:0.51px;">14:40</div>
<div class="t" style="left:901.3px;top:640px;font-size:6.9px;color:rgba(204,204,220,0.86);-webkit-text-stroke:0.14px rgba(204,204,220,0.86);letter-spacing:0.51px;">14:50</div>
</div>
<div style="left:692.5px;top:656.1px;width:8.200px;height:2.200px;border-radius:1.100px;background:#73bf69;"></div>
<div class="t" style="left:704.8px;top:652px;font-size:6.7px;color:rgba(204,204,220,0.82);-webkit-text-stroke:0.1px rgba(204,204,220,0.82);letter-spacing:0.26px;">sum(rate)</div></div>
</div>
</body></html>
